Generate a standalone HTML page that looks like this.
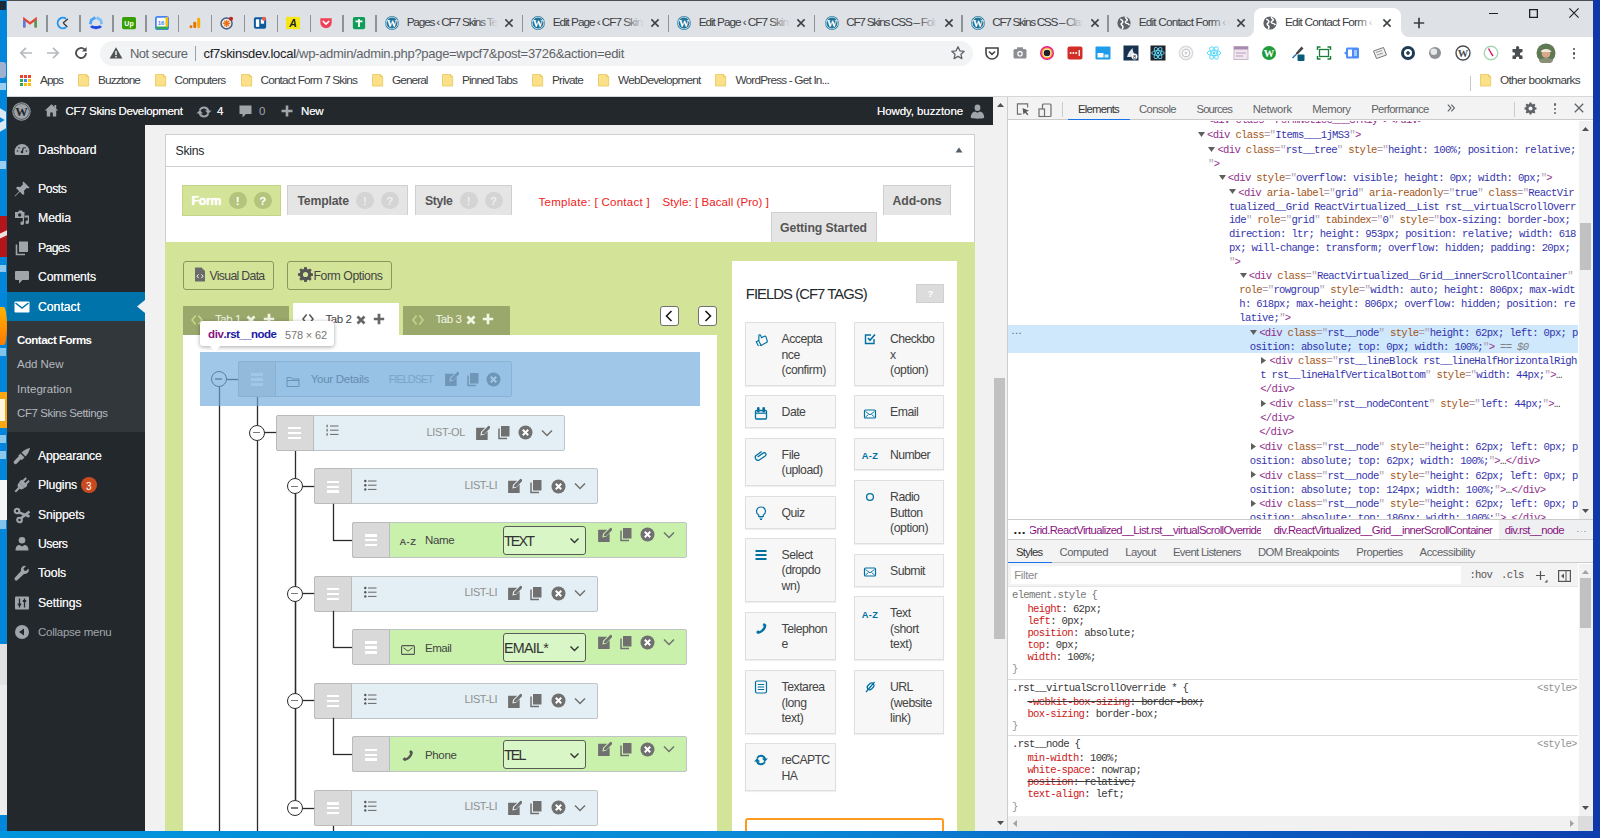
<!DOCTYPE html>
<html lang="en"><head><meta charset="utf-8"><title>Edit Contact Form</title>
<style>
*{box-sizing:border-box;margin:0;padding:0}
html,body{width:1600px;height:838px;overflow:hidden;background:#0084d8;font-family:"Liberation Sans",sans-serif;}
.a{position:absolute}
.m{font-family:"Liberation Mono",monospace;opacity:.9}
.fade:after{content:"";position:absolute;right:0;top:0;width:20px;height:100%;background:linear-gradient(90deg,rgba(222,225,230,0),#dee1e6)}
.fadew:after{content:"";position:absolute;right:0;top:0;width:20px;height:100%;background:linear-gradient(90deg,rgba(255,255,255,0),#fff)}
</style></head>
<body>
<div class="a" style="left:7px;top:0px;width:1586px;height:831px;background:#fff"></div>
<div class="a" style="left:7px;top:0px;width:1586px;height:37px;background:#dee1e6;border-top:1px solid #4c5055"></div>
<div class="a" style="left:1253.5px;top:8.4px;width:147px;height:28.6px;background:#fff;border-radius:8px 8px 0 0"></div>
<svg class="a" style="left:1245.5px;top:29px;" width="8" height="8" viewBox="0 0 8 8"><path d="M8 0v8H0A8 8 0 0 0 8 0z" fill="#fff"/></svg>
<svg class="a" style="left:1400.5px;top:29px;" width="8" height="8" viewBox="0 0 8 8"><path d="M0 0v8H8A8 8 0 0 1 0 0z" fill="#fff"/></svg>
<svg class="a" style="left:23px;top:15.5px;" width="14" height="14" viewBox="0 0 16 16"><path d="M1.5 13V3.5L8 8.5l6.5-5V13" fill="none" stroke="#ea4335" stroke-width="2.6"/><path d="M1.5 13V5" stroke="#4285f4" stroke-width="2.6"/><path d="M14.5 13V5" stroke="#34a853" stroke-width="2.6"/></svg>
<div class="a" style="left:46.3px;top:14.5px;width:1.5px;height:17px;background:#8e9398"></div>
<svg class="a" style="left:55.9px;top:15.5px;" width="14" height="14" viewBox="0 0 16 16"><path d="M11.5 3.2A6 6 0 1 0 11.5 12.8" fill="none" stroke="#2196f3" stroke-width="2.2"/><path d="M8 8l5.5-4.5M8.5 8.3L13 12.5" stroke="#333" stroke-width="1.4"/></svg>
<div class="a" style="left:79.2px;top:14.5px;width:1.5px;height:17px;background:#8e9398"></div>
<svg class="a" style="left:88.8px;top:15.5px;" width="14" height="14" viewBox="0 0 16 16"><path d="M7.300 1.800L2.600 4.600 1.500 9.500" fill="none" stroke="#4aa3f5" stroke-width="3.200"/><path d="M8.700 1.800l4.700 2.800 1.100 4.900" fill="none" stroke="#7cc0f8" stroke-width="3.200"/><path d="M2.500 11.500c1.500 2.500 4 1 5.500 2 1.500-1 4 .5 5.500-2" fill="none" stroke="#2147e8" stroke-width="3.200"/></svg>
<div class="a" style="left:112.1px;top:14.5px;width:1.5px;height:17px;background:#8e9398"></div>
<svg class="a" style="left:121.7px;top:15.5px;" width="14" height="14" viewBox="0 0 16 16"><rect x="0" y="1" width="16" height="14" rx="2" fill="#37a000"/><text x="8" y="11.5" font-size="8" font-weight="bold" fill="#fff" text-anchor="middle" font-family="Liberation Sans,sans-serif">Up</text></svg>
<div class="a" style="left:145px;top:14.5px;width:1.5px;height:17px;background:#8e9398"></div>
<svg class="a" style="left:154.6px;top:15.5px;" width="14" height="14" viewBox="0 0 16 16"><rect x="1" y="1" width="14" height="14" rx="2" fill="#fff" stroke="#4285f4" stroke-width="2"/><path d="M1 12h14v2a1 1 0 0 1-1 1H2a1 1 0 0 1-1-1z" fill="#34a853"/><path d="M12 1h2a1 1 0 0 1 1 1v10h-3z" fill="#fbbc04"/><text x="7" y="10.5" font-size="7" font-weight="bold" fill="#4285f4" text-anchor="middle" font-family="Liberation Sans,sans-serif">16</text></svg>
<div class="a" style="left:177.9px;top:14.5px;width:1.5px;height:17px;background:#8e9398"></div>
<svg class="a" style="left:187.5px;top:15.5px;" width="14" height="14" viewBox="0 0 16 16"><rect x="10.5" y="2" width="3.4" height="12" rx="1.7" fill="#f9ab00"/><rect x="6" y="6.5" width="3.4" height="7.5" rx="1.7" fill="#e37400"/><circle cx="3.4" cy="12.3" r="1.7" fill="#e37400"/></svg>
<div class="a" style="left:210.8px;top:14.5px;width:1.5px;height:17px;background:#8e9398"></div>
<svg class="a" style="left:220.4px;top:15.5px;" width="14" height="14" viewBox="0 0 16 16"><circle cx="7.5" cy="8.5" r="6.3" fill="#f4e3d0" stroke="#3b5a8a" stroke-width="1.6"/><path d="M7.5 4.5v8M3.5 8.5h8M4.8 5.8l5.4 5.4M10.2 5.8l-5.4 5.4" stroke="#e8711c" stroke-width="1.5"/><circle cx="12.6" cy="3.2" r="2.3" fill="#c5221f"/></svg>
<div class="a" style="left:243.7px;top:14.5px;width:1.5px;height:17px;background:#8e9398"></div>
<svg class="a" style="left:253.3px;top:15.5px;" width="14" height="14" viewBox="0 0 16 16"><rect x="1" y="1.5" width="14" height="13" rx="2" fill="#0c5a9e"/><rect x="3.3" y="3.8" width="3.8" height="8.6" fill="#fff"/><rect x="8.9" y="3.8" width="3.8" height="5" fill="#fff"/><circle cx="12.6" cy="3.2" r="2.4" fill="#e8604c"/></svg>
<div class="a" style="left:276.6px;top:14.5px;width:1.5px;height:17px;background:#8e9398"></div>
<svg class="a" style="left:286.2px;top:15.5px;" width="14" height="14" viewBox="0 0 16 16"><rect x="0" y="1" width="16" height="14" fill="#f5e616"/><text x="8" y="13" font-size="12" font-weight="bold" font-style="italic" fill="#222" text-anchor="middle" font-family="Liberation Sans,sans-serif">A</text></svg>
<div class="a" style="left:309.5px;top:14.5px;width:1.5px;height:17px;background:#8e9398"></div>
<svg class="a" style="left:319.1px;top:15.5px;" width="14" height="14" viewBox="0 0 16 16"><path d="M1.5 2.5h13v5a6.5 6.5 0 0 1-13 0z" fill="#ef4056"/><path d="M4.8 6.2L8 9.2l3.2-3" fill="none" stroke="#fff" stroke-width="1.8" stroke-linecap="round"/></svg>
<div class="a" style="left:342.4px;top:14.5px;width:1.5px;height:17px;background:#8e9398"></div>
<svg class="a" style="left:352px;top:15.5px;" width="14" height="14" viewBox="0 0 16 16"><rect x="1" y="1" width="14" height="14" rx="2" fill="#0f9d58"/><path d="M8 3.5v9M4 6h8" stroke="#fff" stroke-width="2"/></svg>
<div class="a" style="left:375.3px;top:14.5px;width:1.5px;height:17px;background:#8e9398"></div>
<svg class="a" style="left:384px;top:14.5px;" width="16" height="16" viewBox="0 0 16 16"><circle cx="8" cy="8" r="6.900" fill="#21759b"/><circle cx="8" cy="8" r="5.900" fill="none" stroke="#fff" stroke-width=".700"/><text x="8" y="11.800" font-size="10.500" font-weight="bold" fill="#fff" text-anchor="middle" font-family="Liberation Serif,serif">W</text></svg>
<div class="a fade" style="left:406.7px;top:14.91px;font-size:11.8px;line-height:15px;color:#3c4043;white-space:nowrap;width:91px;overflow:hidden;letter-spacing:-1.184px;">Pages ‹ CF7 Skins Template</div>
<svg class="a" style="left:503px;top:16.5px;" width="12" height="12" viewBox="0 0 12 12"><path d="M2.4 2.4L9.6 9.6M9.6 2.4L2.4 9.6" stroke="#3c4043" stroke-width="1.5"/></svg>
<div class="a" style="left:521.7px;top:14.5px;width:1.5px;height:17px;background:#8e9398"></div>
<svg class="a" style="left:530px;top:14.5px;" width="16" height="16" viewBox="0 0 16 16"><circle cx="8" cy="8" r="6.900" fill="#21759b"/><circle cx="8" cy="8" r="5.900" fill="none" stroke="#fff" stroke-width=".700"/><text x="8" y="11.800" font-size="10.500" font-weight="bold" fill="#fff" text-anchor="middle" font-family="Liberation Serif,serif">W</text></svg>
<div class="a fade" style="left:552.7px;top:14.91px;font-size:11.8px;line-height:15px;color:#3c4043;white-space:nowrap;width:91px;overflow:hidden;letter-spacing:-1.047px;">Edit Page ‹ CF7 Skins Dev</div>
<svg class="a" style="left:649px;top:16.5px;" width="12" height="12" viewBox="0 0 12 12"><path d="M2.4 2.4L9.6 9.6M9.6 2.4L2.4 9.6" stroke="#3c4043" stroke-width="1.5"/></svg>
<div class="a" style="left:667.7px;top:14.5px;width:1.5px;height:17px;background:#8e9398"></div>
<svg class="a" style="left:676px;top:14.5px;" width="16" height="16" viewBox="0 0 16 16"><circle cx="8" cy="8" r="6.900" fill="#21759b"/><circle cx="8" cy="8" r="5.900" fill="none" stroke="#fff" stroke-width=".700"/><text x="8" y="11.800" font-size="10.500" font-weight="bold" fill="#fff" text-anchor="middle" font-family="Liberation Serif,serif">W</text></svg>
<div class="a fade" style="left:698.7px;top:14.91px;font-size:11.8px;line-height:15px;color:#3c4043;white-space:nowrap;width:91px;overflow:hidden;letter-spacing:-1.047px;">Edit Page ‹ CF7 Skins Dev</div>
<svg class="a" style="left:795px;top:16.5px;" width="12" height="12" viewBox="0 0 12 12"><path d="M2.4 2.4L9.6 9.6M9.6 2.4L2.4 9.6" stroke="#3c4043" stroke-width="1.5"/></svg>
<div class="a" style="left:813.7px;top:14.5px;width:1.5px;height:17px;background:#8e9398"></div>
<svg class="a" style="left:823.5px;top:14.5px;" width="16" height="16" viewBox="0 0 16 16"><circle cx="8" cy="8" r="6.900" fill="#21759b"/><circle cx="8" cy="8" r="5.900" fill="none" stroke="#fff" stroke-width=".700"/><text x="8" y="11.800" font-size="10.500" font-weight="bold" fill="#fff" text-anchor="middle" font-family="Liberation Serif,serif">W</text></svg>
<div class="a fade" style="left:846.2px;top:14.91px;font-size:11.8px;line-height:15px;color:#3c4043;white-space:nowrap;width:91px;overflow:hidden;letter-spacing:-1.278px;">CF7 Skins CSS – Folders</div>
<svg class="a" style="left:942.5px;top:16.5px;" width="12" height="12" viewBox="0 0 12 12"><path d="M2.4 2.4L9.6 9.6M9.6 2.4L2.4 9.6" stroke="#3c4043" stroke-width="1.5"/></svg>
<div class="a" style="left:961.2px;top:14.5px;width:1.5px;height:17px;background:#8e9398"></div>
<svg class="a" style="left:969.5px;top:14.5px;" width="16" height="16" viewBox="0 0 16 16"><circle cx="8" cy="8" r="6.900" fill="#21759b"/><circle cx="8" cy="8" r="5.900" fill="none" stroke="#fff" stroke-width=".700"/><text x="8" y="11.800" font-size="10.500" font-weight="bold" fill="#fff" text-anchor="middle" font-family="Liberation Serif,serif">W</text></svg>
<div class="a fade" style="left:992.2px;top:14.91px;font-size:11.8px;line-height:15px;color:#3c4043;white-space:nowrap;width:91px;overflow:hidden;letter-spacing:-1.321px;">CF7 Skins CSS – Class</div>
<svg class="a" style="left:1088.5px;top:16.5px;" width="12" height="12" viewBox="0 0 12 12"><path d="M2.4 2.4L9.6 9.6M9.6 2.4L2.4 9.6" stroke="#3c4043" stroke-width="1.5"/></svg>
<div class="a" style="left:1107.2px;top:14.5px;width:1.5px;height:17px;background:#8e9398"></div>
<svg class="a" style="left:1116px;top:14.5px;" width="16" height="16" viewBox="0 0 16 16"><circle cx="8" cy="8" r="6.6" fill="#5f6368"/><path d="M4.2 4.2c1.2.2 2.3 1 2.6 2.2.3 1.1-.7 1.6-1.5 2.2-.6.5.5 1.7 1.2 2.3.6.5.3 2.2-.3 3.2M9.5 1.8c-.4 1 .6 1.7 1.4 2.3.9.6.2 1.8-.8 2-1 .3-1 1.6-.1 2 1.2.5 2.5.6 3.4 2" fill="none" stroke="#fff" stroke-width="1.5"/></svg>
<div class="a fade" style="left:1138.7px;top:14.91px;font-size:11.8px;line-height:15px;color:#3c4043;white-space:nowrap;width:91px;overflow:hidden;letter-spacing:-0.817px;">Edit Contact Form ‹ CF7</div>
<svg class="a" style="left:1235px;top:16.5px;" width="12" height="12" viewBox="0 0 12 12"><path d="M2.4 2.4L9.6 9.6M9.6 2.4L2.4 9.6" stroke="#3c4043" stroke-width="1.5"/></svg>
<svg class="a" style="left:1262.3px;top:14.5px;" width="16" height="16" viewBox="0 0 16 16"><circle cx="8" cy="8" r="6.6" fill="#5f6368"/><path d="M4.2 4.2c1.2.2 2.3 1 2.6 2.2.3 1.1-.7 1.6-1.5 2.2-.6.5.5 1.7 1.2 2.3.6.5.3 2.2-.3 3.2M9.5 1.8c-.4 1 .6 1.7 1.4 2.3.9.6.2 1.8-.8 2-1 .3-1 1.6-.1 2 1.2.5 2.5.6 3.4 2" fill="none" stroke="#fff" stroke-width="1.5"/></svg>
<div class="a fadew" style="left:1285px;top:14.91px;font-size:11.8px;line-height:15px;color:#3c4043;white-space:nowrap;width:91px;overflow:hidden;letter-spacing:-0.817px;">Edit Contact Form ‹ CF7</div>
<svg class="a" style="left:1381.3px;top:16.5px;" width="12" height="12" viewBox="0 0 12 12"><path d="M2.4 2.4L9.6 9.6M9.6 2.4L2.4 9.6" stroke="#3c4043" stroke-width="1.5"/></svg>
<svg class="a" style="left:1412.2px;top:16px;" width="14" height="14" viewBox="0 0 14 14"><path d="M7 1.800v10.400M1.800 7h10.400" stroke="#3c4043" stroke-width="1.700"/></svg>
<div class="a" style="left:1489px;top:13px;width:9px;height:1.2px;background:#222"></div>
<div class="a" style="left:1529.2px;top:8.7px;width:9px;height:9px;border:1px solid #222;box-shadow:inset 0 0 0 .300px #222"></div>
<svg class="a" style="left:1568.5px;top:8.3px;" width="10" height="10" viewBox="0 0 10 10"><path d="M.400 .400l9.200 9.200M9.600 .400L.400 9.600" stroke="#222" stroke-width="1.150"/></svg>
<svg class="a" style="left:18px;top:45px;" width="16" height="16" viewBox="0 0 16 16"><path d="M14 8H3M8 2.8L2.8 8 8 13.2" fill="none" stroke="#b6b9bd" stroke-width="1.7"/></svg>
<svg class="a" style="left:45px;top:45px;" width="16" height="16" viewBox="0 0 16 16"><path d="M2 8h11M8 2.8L13.2 8 8 13.2" fill="none" stroke="#b6b9bd" stroke-width="1.7"/></svg>
<svg class="a" style="left:73px;top:45px;" width="16" height="16" viewBox="0 0 16 16"><path d="M13 8a5 5 0 1 1-1.5-3.6" fill="none" stroke="#4a4d51" stroke-width="1.8"/><path d="M13.6 2v4.6H9z" fill="#4a4d51"/></svg>
<div class="a" style="left:100px;top:40.5px;width:872.5px;height:25.5px;background:#f1f3f4;border-radius:13px"></div>
<svg class="a" style="left:109px;top:46px;" width="14" height="14" viewBox="0 0 14 14"><path d="M7 1.2L13.4 12.5H0.6z" fill="#4f5356"/><path d="M7 5v4" stroke="#f1f3f4" stroke-width="1.5"/><circle cx="7" cy="10.7" r=".85" fill="#f1f3f4"/></svg>
<div class="a" style="left:130px;top:44.50px;font-size:13px;line-height:17px;color:#5f6368;white-space:nowrap;letter-spacing:-0.536px;">Not secure</div>
<div class="a" style="left:195px;top:46px;width:1px;height:15px;background:#9aa0a6"></div>
<div class="a" style="left:203.5px;top:44.50px;font-size:13px;line-height:17px;color:#5f6368;white-space:nowrap;letter-spacing:-0.297px;"><span style="color:#202124">cf7skinsdev.local</span>/wp-admin/admin.php?page=wpcf7&amp;post=3726&amp;action=edit</div>
<svg class="a" style="left:950px;top:45px;" width="16" height="16" viewBox="0 0 16 16"><path d="M8 1.8l1.9 4 4.3.5-3.2 3 .9 4.3L8 11.4l-3.9 2.2.9-4.3-3.2-3 4.3-.5z" fill="none" stroke="#5f6368" stroke-width="1.3" stroke-linejoin="round"/></svg>
<svg class="a" style="left:984px;top:45px;" width="16" height="16" viewBox="0 0 16 16"><path d="M2 3h12v5a6 6 0 0 1-12 0z" fill="none" stroke="#444" stroke-width="1.6"/><path d="M5 6.5l3 2.8 3-2.8" fill="none" stroke="#444" stroke-width="1.6"/></svg>
<svg class="a" style="left:1011.7px;top:45px;" width="16" height="16" viewBox="0 0 16 16"><rect x="1.5" y="4" width="13" height="9.5" rx="1.5" fill="#8a8d91"/><rect x="5" y="2.3" width="6" height="3" fill="#8a8d91"/><circle cx="8" cy="8.8" r="2.8" fill="#fff"/><circle cx="8" cy="8.8" r="1.6" fill="#8a8d91"/></svg>
<svg class="a" style="left:1039.4px;top:45px;" width="16" height="16" viewBox="0 0 16 16"><circle cx="8" cy="8" r="7" fill="#e91e8c"/><circle cx="8" cy="8" r="5.6" fill="#f6a623"/><circle cx="8" cy="8" r="4.2" fill="#fff"/><circle cx="8" cy="8" r="3.3" fill="#222"/></svg>
<svg class="a" style="left:1067.1px;top:45px;" width="16" height="16" viewBox="0 0 16 16"><rect x="0.5" y="1.5" width="15" height="13" rx="2" fill="#d32d27"/><circle cx="3.6" cy="8" r="1" fill="#fff"/><circle cx="6.4" cy="8" r="1" fill="#fff"/><circle cx="9.2" cy="8" r="1" fill="#fff"/><rect x="11.6" y="5" width="1.3" height="6" fill="#fff"/></svg>
<svg class="a" style="left:1094.8px;top:45px;" width="16" height="16" viewBox="0 0 16 16"><rect x="0.5" y="1.5" width="15" height="13" rx="1" fill="#1e9be9"/><rect x="2.5" y="8" width="6" height="4.5" fill="#fff"/><rect x="9.5" y="9.5" width="4" height="3" fill="#d5ecfb"/></svg>
<svg class="a" style="left:1122.5px;top:45px;" width="16" height="16" viewBox="0 0 16 16"><rect x="0.5" y="0.5" width="15" height="15" fill="#16324f"/><path d="M4 12c1-4 3-7 6-9-1 3 1 4 1 6s-2 3-4 3" fill="#dfe7ef"/><circle cx="11.5" cy="11.5" r="3" fill="#fff"/><text x="11.5" y="13.7" font-size="5.5" text-anchor="middle" fill="#222" font-family="Liberation Sans,sans-serif">8</text></svg>
<svg class="a" style="left:1150.2px;top:45px;" width="16" height="16" viewBox="0 0 16 16"><rect x="0.5" y="0.5" width="15" height="15" fill="#20232a"/><g fill="none" stroke="#61dafb" stroke-width=".9"><ellipse cx="8" cy="8" rx="6.3" ry="2.4"/><ellipse cx="8" cy="8" rx="6.3" ry="2.4" transform="rotate(60 8 8)"/><ellipse cx="8" cy="8" rx="6.3" ry="2.4" transform="rotate(120 8 8)"/></g><circle cx="8" cy="8" r="1.2" fill="#61dafb"/></svg>
<svg class="a" style="left:1177.9px;top:45px;" width="16" height="16" viewBox="0 0 16 16"><circle cx="8" cy="8" r="6.6" fill="none" stroke="#d9dbde" stroke-width="1.6"/><circle cx="8" cy="8" r="3.8" fill="none" stroke="#c8cacd" stroke-width="1.4"/><circle cx="8" cy="8" r="1.4" fill="#d0d2d5"/></svg>
<svg class="a" style="left:1205.6px;top:45px;" width="16" height="16" viewBox="0 0 16 16"><g fill="none" stroke="#61dafb" stroke-width="1"><ellipse cx="8" cy="8" rx="6.8" ry="2.6"/><ellipse cx="8" cy="8" rx="6.8" ry="2.6" transform="rotate(60 8 8)"/><ellipse cx="8" cy="8" rx="6.8" ry="2.6" transform="rotate(120 8 8)"/></g><circle cx="8" cy="8" r="1.4" fill="#61dafb"/></svg>
<svg class="a" style="left:1233.3px;top:45px;" width="16" height="16" viewBox="0 0 16 16"><rect x="1" y="1.5" width="14" height="13" fill="#efe6ef" stroke="#c9b8cc" stroke-width="1"/><rect x="1" y="1.5" width="14" height="3" fill="#a88bb0"/><path d="M3 8h10M3 11h7" stroke="#cdb9d1" stroke-width="1.4"/></svg>
<svg class="a" style="left:1261px;top:45px;" width="16" height="16" viewBox="0 0 16 16"><circle cx="8" cy="8" r="7" fill="#1f9d3a"/><text x="8" y="12" font-size="10.5" font-weight="bold" fill="#fff" text-anchor="middle" font-family="Liberation Serif,serif">W</text></svg>
<svg class="a" style="left:1288.7px;top:45px;" width="16" height="16" viewBox="0 0 16 16"><path d="M12.5 1.5l2 2-5.5 5.5-2.5 1 .8-2.6z" fill="#444"/><path d="M7 9.5L3.5 13" stroke="#2f6fb4" stroke-width="1.6"/><rect x="8.5" y="9.5" width="7" height="6.5" rx="1" fill="#0b5b7a"/></svg>
<svg class="a" style="left:1316.4px;top:45px;" width="16" height="16" viewBox="0 0 16 16"><path d="M1.5 5V2h3M11.5 2h3v3M14.500 11v3h-3M4.500 14h-3v-3" fill="none" stroke="#1b7f3b" stroke-width="1.5"/><rect x="3.5" y="4.500" width="9" height="7" fill="none" stroke="#1b7f3b" stroke-width="1.3"/></svg>
<svg class="a" style="left:1344.1px;top:45px;" width="16" height="16" viewBox="0 0 16 16"><rect x="2" y="2.500" width="13" height="11" rx="1.5" fill="#4a8df8"/><rect x="4" y="4.500" width="4" height="7" fill="#fff"/><path d="M10 6h3M10 8h3M10 10h3" stroke="#fff" stroke-width="1"/><path d="M0 8l2.500-2v4z" fill="#4a8df8"/></svg>
<svg class="a" style="left:1371.8px;top:45px;" width="16" height="16" viewBox="0 0 16 16"><path d="M1.500 6l10-3.500 3 7.500-10 3.500z" fill="#eee" stroke="#777" stroke-width="1"/><path d="M4 7.500l6-2M5 10l6-2" stroke="#999" stroke-width="1"/></svg>
<svg class="a" style="left:1399.5px;top:45px;" width="16" height="16" viewBox="0 0 16 16"><circle cx="8" cy="8" r="7" fill="#1d3a57"/><circle cx="8" cy="8" r="4" fill="#fff"/><path d="M6 8h4M8 6v4" stroke="#1d3a57" stroke-width="1.6"/></svg>
<svg class="a" style="left:1427.2px;top:45px;" width="16" height="16" viewBox="0 0 16 16"><circle cx="8" cy="8" r="6" fill="#8f9296"/><circle cx="6.800" cy="6.800" r="3.300" fill="#e8e8e8"/></svg>
<svg class="a" style="left:1454.9px;top:45px;" width="16" height="16" viewBox="0 0 16 16"><circle cx="8" cy="8" r="7" fill="#fff" stroke="#4a4d51" stroke-width="1.4"/><text x="8" y="12" font-size="10.5" font-weight="bold" fill="#4a4d51" text-anchor="middle" font-family="Liberation Serif,serif">W</text></svg>
<svg class="a" style="left:1482.6px;top:45px;" width="16" height="16" viewBox="0 0 16 16"><circle cx="8" cy="8" r="6.800" fill="#fff" stroke="#a7d7b3" stroke-width="1.4"/><path d="M8 8L5.500 3.500M8 8l2 3" stroke="#d81b60" stroke-width="1.400"/></svg>
<svg class="a" style="left:1510.3px;top:45px;" width="16" height="16" viewBox="0 0 16 16"><path d="M6 2.500a1.600 1.600 0 0 1 3.200 0V4h3.300v3.300h-1a1.600 1.600 0 0 0 0 3.200h1V14H9.200v-1a1.600 1.600 0 0 0-3.200 0v1H2.500v-3.500h1a1.600 1.600 0 0 0 0-3.200h-1V4H6z" fill="#4a4d51"/></svg>
<svg class="a" style="left:1536px;top:43px;" width="20" height="20" viewBox="0 0 20 20"><circle cx="10" cy="10" r="9.500" fill="#5f7a52"/><circle cx="10" cy="10.500" r="4.300" fill="#d9a98c"/><path d="M5 8.500c0-3.500 10-3.500 10 0l1 .5H5z" fill="#efe9dc"/><path d="M3 18c1-4 13-4 14 0a9.500 9.500 0 0 1-14 0z" fill="#8b8f7a"/></svg>
<div class="a" style="left:1572.7px;top:47.6px;width:2.8px;height:2.8px;background:#4a4d51;border-radius:50%"></div>
<div class="a" style="left:1572.7px;top:52.1px;width:2.8px;height:2.8px;background:#4a4d51;border-radius:50%"></div>
<div class="a" style="left:1572.7px;top:56.6px;width:2.8px;height:2.8px;background:#4a4d51;border-radius:50%"></div>
<div class="a" style="left:7px;top:96px;width:1586px;height:1px;background:#d5d7db"></div>
<div class="a" style="left:19.8px;top:74.5px;width:3px;height:3px;background:#ea4335"></div>
<div class="a" style="left:24px;top:74.5px;width:3px;height:3px;background:#ea4335"></div>
<div class="a" style="left:28.2px;top:74.5px;width:3px;height:3px;background:#ea4335"></div>
<div class="a" style="left:19.8px;top:78.8px;width:3px;height:3px;background:#34a853"></div>
<div class="a" style="left:24px;top:78.8px;width:3px;height:3px;background:#4285f4"></div>
<div class="a" style="left:28.2px;top:78.8px;width:3px;height:3px;background:#fbbc04"></div>
<div class="a" style="left:19.8px;top:83.1px;width:3px;height:3px;background:#34a853"></div>
<div class="a" style="left:24px;top:83.1px;width:3px;height:3px;background:#fbbc04"></div>
<div class="a" style="left:28.2px;top:83.1px;width:3px;height:3px;background:#fbbc04"></div>
<div class="a" style="left:40px;top:72.71px;font-size:11.8px;line-height:15px;color:#3c4043;white-space:nowrap;letter-spacing:-0.974px;">Apps</div>
<svg class="a" style="left:78px;top:74.3px;" width="12" height="13" viewBox="0 0 12 13"><path d="M.5 .5h8l2.200 2.200v9.300H.5z" fill="#fbe08a" stroke="#eac55a" stroke-width=".800"/><path d="M8.500 .5v2.200h2.200" fill="#f3d06b" stroke="#eac55a" stroke-width=".600"/></svg>
<div class="a" style="left:98px;top:72.71px;font-size:11.8px;line-height:15px;color:#3c4043;white-space:nowrap;letter-spacing:-0.900px;">Buzztone</div>
<svg class="a" style="left:155px;top:74.3px;" width="12" height="13" viewBox="0 0 12 13"><path d="M.5 .5h8l2.200 2.200v9.300H.5z" fill="#fbe08a" stroke="#eac55a" stroke-width=".800"/><path d="M8.500 .5v2.200h2.200" fill="#f3d06b" stroke="#eac55a" stroke-width=".600"/></svg>
<div class="a" style="left:174.5px;top:72.71px;font-size:11.8px;line-height:15px;color:#3c4043;white-space:nowrap;letter-spacing:-0.746px;">Computers</div>
<svg class="a" style="left:241px;top:74.3px;" width="12" height="13" viewBox="0 0 12 13"><path d="M.5 .5h8l2.200 2.200v9.300H.5z" fill="#fbe08a" stroke="#eac55a" stroke-width=".800"/><path d="M8.500 .5v2.200h2.200" fill="#f3d06b" stroke="#eac55a" stroke-width=".600"/></svg>
<div class="a" style="left:260.5px;top:72.71px;font-size:11.8px;line-height:15px;color:#3c4043;white-space:nowrap;letter-spacing:-0.848px;">Contact Form 7 Skins</div>
<svg class="a" style="left:372px;top:74.3px;" width="12" height="13" viewBox="0 0 12 13"><path d="M.5 .5h8l2.200 2.200v9.300H.5z" fill="#fbe08a" stroke="#eac55a" stroke-width=".800"/><path d="M8.500 .5v2.200h2.200" fill="#f3d06b" stroke="#eac55a" stroke-width=".600"/></svg>
<div class="a" style="left:392px;top:72.71px;font-size:11.8px;line-height:15px;color:#3c4043;white-space:nowrap;letter-spacing:-0.926px;">General</div>
<svg class="a" style="left:442px;top:74.3px;" width="12" height="13" viewBox="0 0 12 13"><path d="M.5 .5h8l2.200 2.200v9.300H.5z" fill="#fbe08a" stroke="#eac55a" stroke-width=".800"/><path d="M8.500 .5v2.200h2.200" fill="#f3d06b" stroke="#eac55a" stroke-width=".600"/></svg>
<div class="a" style="left:462px;top:72.71px;font-size:11.8px;line-height:15px;color:#3c4043;white-space:nowrap;letter-spacing:-0.885px;">Pinned Tabs</div>
<svg class="a" style="left:532px;top:74.3px;" width="12" height="13" viewBox="0 0 12 13"><path d="M.5 .5h8l2.200 2.200v9.300H.5z" fill="#fbe08a" stroke="#eac55a" stroke-width=".800"/><path d="M8.500 .5v2.200h2.200" fill="#f3d06b" stroke="#eac55a" stroke-width=".600"/></svg>
<div class="a" style="left:552px;top:72.71px;font-size:11.8px;line-height:15px;color:#3c4043;white-space:nowrap;letter-spacing:-0.818px;">Private</div>
<svg class="a" style="left:598px;top:74.3px;" width="12" height="13" viewBox="0 0 12 13"><path d="M.5 .5h8l2.200 2.200v9.300H.5z" fill="#fbe08a" stroke="#eac55a" stroke-width=".800"/><path d="M8.500 .5v2.200h2.200" fill="#f3d06b" stroke="#eac55a" stroke-width=".600"/></svg>
<div class="a" style="left:618px;top:72.71px;font-size:11.8px;line-height:15px;color:#3c4043;white-space:nowrap;letter-spacing:-0.791px;">WebDevelopment</div>
<svg class="a" style="left:715px;top:74.3px;" width="12" height="13" viewBox="0 0 12 13"><path d="M.5 .5h8l2.200 2.200v9.300H.5z" fill="#fbe08a" stroke="#eac55a" stroke-width=".800"/><path d="M8.500 .5v2.200h2.200" fill="#f3d06b" stroke="#eac55a" stroke-width=".600"/></svg>
<div class="a" style="left:735.5px;top:72.71px;font-size:11.8px;line-height:15px;color:#3c4043;white-space:nowrap;letter-spacing:-0.814px;">WordPress - Get In...</div>
<div class="a" style="left:1470px;top:76px;width:1px;height:15px;background:#c4c7cc"></div>
<svg class="a" style="left:1480px;top:74.3px;" width="12" height="13" viewBox="0 0 12 13"><path d="M.5 .5h8l2.200 2.200v9.300H.5z" fill="#fbe08a" stroke="#eac55a" stroke-width=".800"/><path d="M8.500 .5v2.200h2.200" fill="#f3d06b" stroke="#eac55a" stroke-width=".600"/></svg>
<div class="a" style="left:1500px;top:72.71px;font-size:11.8px;line-height:15px;color:#3c4043;white-space:nowrap;letter-spacing:-0.700px;">Other bookmarks</div>
<div class="a" style="left:7px;top:97px;width:986px;height:734px;background:#f1f1f1"></div>
<div class="a" style="left:7px;top:97px;width:138px;height:734px;background:#23282d"></div>
<div class="a" style="left:7px;top:97px;width:986px;height:28px;background:#23282d"></div>
<svg class="a" style="left:12.2px;top:101.5px;" width="19" height="19" viewBox="0 0 19 19"><circle cx="9.500" cy="9.500" r="9.200" fill="#9ea3a8"/><circle cx="9.500" cy="9.500" r="7.900" fill="none" stroke="#23282d" stroke-width=".600"/><text x="9.500" y="14" font-size="13" font-weight="bold" fill="#23282d" text-anchor="middle" font-family="Liberation Serif,serif" textLength="12.500" lengthAdjust="spacingAndGlyphs">W</text></svg>
<svg class="a" style="left:44px;top:103px;" width="15" height="15" viewBox="0 0 15 15"><path d="M7.500 1.200L.8 7.500h2v6h3.400V9.500h2.600v4h3.400v-6h2z" fill="#a0a5aa"/><rect x="10.400" y="2" width="1.800" height="3.500" fill="#a0a5aa"/></svg>
<div class="a" style="left:65.5px;top:104.32px;font-size:11.5px;line-height:15px;color:#eee;white-space:nowrap;letter-spacing:-0.333px;text-shadow:0 0 .5px #eee;">CF7 Skins Development</div>
<svg class="a" style="left:196px;top:103.5px;" width="16" height="16" viewBox="0 0 16 16"><path d="M8 2.500a5.500 5.500 0 0 1 5.300 4h2.200l-3.300 3.600L9 6.500h2.100A3.600 3.600 0 0 0 4.600 6.800L3 5.500A5.500 5.500 0 0 1 8 2.500zM8 13.500a5.500 5.500 0 0 1-5.300-4H.5l3.300-3.600L7 9.500H4.900a3.600 3.600 0 0 0 6.500-.3L13 10.500a5.500 5.500 0 0 1-5 3z" fill="#a0a5aa"/></svg>
<div class="a" style="left:217px;top:104.32px;font-size:11.5px;line-height:15px;color:#eee;white-space:nowrap;text-shadow:0 0 .5px #eee;">4</div>
<svg class="a" style="left:238px;top:104px;" width="15" height="15" viewBox="0 0 15 15"><path d="M1.500 1.500h12v8.500H8l-3.500 3.500V10H1.500z" fill="#a0a5aa"/></svg>
<div class="a" style="left:259px;top:104.32px;font-size:11.5px;line-height:15px;color:#a0a5aa;white-space:nowrap;">0</div>
<svg class="a" style="left:280px;top:104px;" width="14" height="14" viewBox="0 0 14 14"><path d="M7 1.500v11M1.500 7h11" stroke="#a0a5aa" stroke-width="2.600"/></svg>
<div class="a" style="left:301px;top:104.32px;font-size:11.5px;line-height:15px;color:#eee;white-space:nowrap;letter-spacing:-0.169px;text-shadow:0 0 .5px #eee;">New</div>
<div class="a" style="left:877px;top:104.32px;font-size:11.5px;line-height:15px;color:#eee;white-space:nowrap;letter-spacing:-0.091px;text-shadow:0 0 .5px #eee;">Howdy, buzztone</div>
<svg class="a" style="left:969.5px;top:103.5px;" width="15" height="15" viewBox="0 0 15 15"><ellipse cx="7.500" cy="3.800" rx="2.900" ry="3.300" fill="#a0a5aa"/><path d="M.8 13.800c0-4.500 2.300-6 4.200-6.300l2.500 1.300 2.500-1.300c1.900.3 4.200 1.800 4.200 6.300-2.500 1.200-11 1.200-13.400 0z" fill="#a0a5aa"/></svg>
<div class="a" style="left:7px;top:291.5px;width:138px;height:29.5px;background:#0073aa"></div>
<svg class="a" style="left:137px;top:300px;" width="8" height="13" viewBox="0 0 8 13"><path d="M8 0v13L0 6.500z" fill="#f1f1f1"/></svg>
<div class="a" style="left:7px;top:321px;width:138px;height:111px;background:#32373c"></div>
<svg class="a" style="left:13px;top:141px;" width="18" height="18" viewBox="0 0 18 18"><path d="M9 3a7.400 7.400 0 0 0-7.400 7.400c0 1.300.3 2.500.8 3.600h13.200c.5-1.100.8-2.300.8-3.600A7.400 7.400 0 0 0 9 3z" fill="#a0a5aa"/><circle cx="9" cy="11" r="1.300" fill="#23282d"/><path d="M9 11l1.500-4.500" stroke="#23282d" stroke-width="1.200"/><circle cx="4.500" cy="10" r=".8" fill="#23282d"/><circle cx="13.500" cy="10" r=".8" fill="#23282d"/><circle cx="6" cy="6.800" r=".8" fill="#23282d"/><circle cx="12" cy="6.800" r=".8" fill="#23282d"/></svg>
<div class="a" style="left:38px;top:142.26px;font-size:12.25px;line-height:16px;color:#eee;white-space:nowrap;letter-spacing:-0.159px;text-shadow:0 0 .5px #eee;">Dashboard</div>
<svg class="a" style="left:13px;top:179.5px;" width="18" height="18" viewBox="0 0 18 18"><path d="M10.500 1.500l6 6-1.300 1-1.500-.5-2.700 2.700.300 3-1.300 1.300-3.200-3.200L2 16.500l-.5-.5 4.700-4.800L3 8l1.300-1.300 3 .3L10 4.300l-.5-1.500z" fill="#a0a5aa"/></svg>
<div class="a" style="left:38px;top:180.76px;font-size:12.25px;line-height:16px;color:#eee;white-space:nowrap;letter-spacing:-0.427px;text-shadow:0 0 .5px #eee;">Posts</div>
<svg class="a" style="left:13px;top:209px;" width="18" height="18" viewBox="0 0 18 18"><path d="M2 3h3l1-1.500h3L10 3h1.500v6H2z" fill="#a0a5aa"/><circle cx="6.700" cy="6" r="1.700" fill="#23282d"/><path d="M11 8v6.300a1.800 1.800 0 1 1-1.200-1.700V8zM16 6.500v6.800a1.800 1.800 0 1 1-1.200-1.700V8.500H12V6.500z" fill="#a0a5aa"/></svg>
<div class="a" style="left:38px;top:210.26px;font-size:12.25px;line-height:16px;color:#eee;white-space:nowrap;letter-spacing:-0.073px;text-shadow:0 0 .5px #eee;">Media</div>
<svg class="a" style="left:13px;top:238.5px;" width="18" height="18" viewBox="0 0 18 18"><path d="M6 2.500h9v10.500H6z" fill="#a0a5aa"/><path d="M3.500 5.500v10H12" fill="none" stroke="#a0a5aa" stroke-width="1.600"/></svg>
<div class="a" style="left:38px;top:239.76px;font-size:12.25px;line-height:16px;color:#eee;white-space:nowrap;letter-spacing:-0.647px;text-shadow:0 0 .5px #eee;">Pages</div>
<svg class="a" style="left:13px;top:268px;" width="18" height="18" viewBox="0 0 18 18"><path d="M3 3h12a1 1 0 0 1 1 1v7a1 1 0 0 1-1 1H9.500L6 15.500V12H3a1 1 0 0 1-1-1V4a1 1 0 0 1 1-1z" fill="#a0a5aa"/></svg>
<div class="a" style="left:38px;top:269.26px;font-size:12.25px;line-height:16px;color:#eee;white-space:nowrap;letter-spacing:-0.153px;text-shadow:0 0 .5px #eee;">Comments</div>
<svg class="a" style="left:13px;top:297.5px;" width="18" height="18" viewBox="0 0 18 18"><rect x="1.500" y="3.500" width="15" height="11" rx="1" fill="#fff"/><path d="M2.500 5l6.500 5 6.500-5" fill="none" stroke="#0073aa" stroke-width="1.500"/></svg>
<div class="a" style="left:38px;top:298.76px;font-size:12.25px;line-height:16px;color:#fff;white-space:nowrap;letter-spacing:-0.031px;text-shadow:0 0 .5px #eee;">Contact</div>
<svg class="a" style="left:13px;top:446.5px;" width="18" height="18" viewBox="0 0 18 18"><path d="M8.500 5.500C11 3 14.500 1.500 17 1c-.500 2.500-2 6-4.500 8.500z" fill="#a0a5aa"/><path d="M7.500 6.500l4 4-2.300 2.300c-1.500 1.200-3-2.800-4-4z" fill="#a0a5aa"/><path d="M6.300 11.200L2.500 15.300" stroke="#a0a5aa" stroke-width="3.600" stroke-linecap="round"/></svg>
<div class="a" style="left:38px;top:447.76px;font-size:12.25px;line-height:16px;color:#eee;white-space:nowrap;letter-spacing:-0.257px;text-shadow:0 0 .5px #eee;">Appearance</div>
<svg class="a" style="left:13px;top:476px;" width="18" height="18" viewBox="0 0 18 18"><g transform="rotate(45 9 9)" fill="#a0a5aa"><rect x="4.800" y="5.300" width="8.400" height="4" rx=".800"/><path d="M5.300 9.300h7.400c0 3-1.500 4.300-3.700 4.300S5.300 12.300 5.300 9.300z"/><rect x="6" y="1" width="2" height="5"/><rect x="10" y="1" width="2" height="5"/><rect x="8" y="13" width="2" height="5.500"/></g></svg>
<div class="a" style="left:38px;top:477.26px;font-size:12.25px;line-height:16px;color:#eee;white-space:nowrap;letter-spacing:-0.168px;text-shadow:0 0 .5px #eee;">Plugins</div>
<svg class="a" style="left:13px;top:505.5px;" width="18" height="18" viewBox="0 0 18 18"><circle cx="4" cy="5" r="2.300" fill="none" stroke="#a0a5aa" stroke-width="2.100"/><circle cx="6.500" cy="14" r="2.300" fill="none" stroke="#a0a5aa" stroke-width="2.100"/><path d="M5.800 6.300L16.500 10.500M8 12.300l8.500-6.800" stroke="#a0a5aa" stroke-width="2.500"/></svg>
<div class="a" style="left:38px;top:506.76px;font-size:12.25px;line-height:16px;color:#eee;white-space:nowrap;letter-spacing:-0.147px;text-shadow:0 0 .5px #eee;">Snippets</div>
<svg class="a" style="left:13px;top:534.5px;" width="18" height="18" viewBox="0 0 18 18"><circle cx="9" cy="5.300" r="3.300" fill="#a0a5aa"/><path d="M2.500 15.500c0-4.500 2.500-5.500 4-5.500l2.500 1.500 2.500-1.500c1.500 0 4 1 4 5.500z" fill="#a0a5aa"/></svg>
<div class="a" style="left:38px;top:535.76px;font-size:12.25px;line-height:16px;color:#eee;white-space:nowrap;letter-spacing:-0.498px;text-shadow:0 0 .5px #eee;">Users</div>
<svg class="a" style="left:13px;top:564px;" width="18" height="18" viewBox="0 0 18 18"><path d="M15.500 4.500l-2.500 2.500-2-.5-.5-2L13 2a4 4 0 0 0-5 5L2 13.500a1.700 1.700 0 0 0 2.500 2.500L11 10a4 4 0 0 0 4.500-5.500z" fill="#a0a5aa"/></svg>
<div class="a" style="left:38px;top:565.26px;font-size:12.25px;line-height:16px;color:#eee;white-space:nowrap;letter-spacing:-0.120px;text-shadow:0 0 .5px #eee;">Tools</div>
<svg class="a" style="left:13px;top:593.5px;" width="18" height="18" viewBox="0 0 18 18"><rect x="2" y="2.500" width="14" height="13" rx="1" fill="#a0a5aa"/><path d="M6.500 4.500v9M11.500 4.500v9" stroke="#23282d" stroke-width="1.300"/><rect x="4.800" y="9.500" width="3.400" height="2" fill="#23282d"/><rect x="9.800" y="6" width="3.400" height="2" fill="#23282d"/></svg>
<div class="a" style="left:38px;top:594.76px;font-size:12.25px;line-height:16px;color:#eee;white-space:nowrap;letter-spacing:-0.095px;text-shadow:0 0 .5px #eee;">Settings</div>
<svg class="a" style="left:13px;top:623px;" width="18" height="18" viewBox="0 0 18 18"><circle cx="9" cy="9" r="7" fill="#a0a5aa"/><path d="M11 5.500v7L6 9z" fill="#23282d"/></svg>
<div class="a" style="left:38px;top:625.02px;font-size:11.5px;line-height:15px;color:#a0a5aa;white-space:nowrap;letter-spacing:-0.247px;">Collapse menu</div>
<div class="a" style="left:17px;top:332.52px;font-size:11.5px;line-height:15px;color:#fff;white-space:nowrap;font-weight:bold;letter-spacing:-0.511px;">Contact Forms</div>
<div class="a" style="left:17px;top:357.02px;font-size:11.5px;line-height:15px;color:#b4b9be;white-space:nowrap;letter-spacing:-0.023px;">Add New</div>
<div class="a" style="left:17px;top:381.52px;font-size:11.5px;line-height:15px;color:#b4b9be;white-space:nowrap;letter-spacing:0.059px;">Integration</div>
<div class="a" style="left:17px;top:405.52px;font-size:11.5px;line-height:15px;color:#b4b9be;white-space:nowrap;letter-spacing:-0.405px;">CF7 Skins Settings</div>
<div class="a" style="left:81px;top:477px;width:16px;height:16px;background:#ca4a1f;border-radius:50%"></div>
<div class="a" style="left:86px;top:479.54px;font-size:10px;line-height:13px;color:#fff;white-space:nowrap;">3</div>
<div class="a" style="left:993px;top:97px;width:14px;height:734px;background:#f1f1f1"></div>
<svg class="a" style="left:996.5px;top:103.3px;" width="7" height="4" viewBox="0 0 7 4"><path d="M3.500 0L7 4H0z" fill="#505050"/></svg>
<svg class="a" style="left:996.5px;top:820.5px;" width="7" height="4" viewBox="0 0 7 4"><path d="M3.500 4L7 0H0z" fill="#505050"/></svg>
<div class="a" style="left:994.2px;top:377.7px;width:11.3px;height:261.2px;background:#c1c1c1"></div>
<div class="a" style="left:164.5px;top:134px;width:810.2px;height:700px;background:#fff;border:1px solid #ccd0d4"></div>
<div class="a" style="left:164.5px;top:165.5px;width:810.2px;height:1px;background:#ccd0d4"></div>
<div class="a" style="left:175.5px;top:142.76px;font-size:12.25px;line-height:16px;color:#23282d;white-space:nowrap;letter-spacing:-0.291px;">Skins</div>
<svg class="a" style="left:955px;top:147px;" width="8" height="6" viewBox="0 0 8 6"><path d="M4 .5L7.500 5.500H.5z" fill="#555d66"/></svg>
<div class="a" style="left:181.5px;top:184.5px;width:99.5px;height:31px;background:#d3e498;border:1px solid #c3d488"></div>
<div class="a" style="left:191.5px;top:192.76px;font-size:12.25px;line-height:16px;color:#fff;white-space:nowrap;font-weight:bold;letter-spacing:-0.219px;text-shadow:0 0 1px #fff;">Form</div>
<div class="a" style="left:229px;top:191.75px;width:17.5px;height:17.5px;background:#b5c47d;border-radius:50%"></div>
<div class="a" style="left:235.65px;top:193.82px;font-size:11.5px;line-height:15px;color:#fff;white-space:nowrap;font-weight:bold;">!</div>
<div class="a" style="left:254.25px;top:191.75px;width:17.5px;height:17.5px;background:#b5c47d;border-radius:50%"></div>
<div class="a" style="left:259.3px;top:193.82px;font-size:11.5px;line-height:15px;color:#fff;white-space:nowrap;font-weight:bold;">?</div>
<div class="a" style="left:287.25px;top:184.5px;width:121px;height:30.5px;background:#e5e5e5;border:1px solid #cfcfcf;border-bottom:none"></div>
<div class="a" style="left:297.5px;top:192.76px;font-size:12.25px;line-height:16px;color:#555;white-space:nowrap;font-weight:bold;letter-spacing:-0.203px;">Template</div>
<div class="a" style="left:356.25px;top:191.75px;width:17.5px;height:17.5px;background:#d4d4d4;border-radius:50%"></div>
<div class="a" style="left:362.9px;top:193.82px;font-size:11.5px;line-height:15px;color:#eee;white-space:nowrap;font-weight:bold;">!</div>
<div class="a" style="left:381.25px;top:191.75px;width:17.5px;height:17.5px;background:#d4d4d4;border-radius:50%"></div>
<div class="a" style="left:386.3px;top:193.82px;font-size:11.5px;line-height:15px;color:#eee;white-space:nowrap;font-weight:bold;">?</div>
<div class="a" style="left:414.5px;top:184.5px;width:97.5px;height:30.5px;background:#e5e5e5;border:1px solid #cfcfcf;border-bottom:none"></div>
<div class="a" style="left:425px;top:192.76px;font-size:12.25px;line-height:16px;color:#555;white-space:nowrap;font-weight:bold;letter-spacing:-0.356px;">Style</div>
<div class="a" style="left:460px;top:191.75px;width:17.5px;height:17.5px;background:#d4d4d4;border-radius:50%"></div>
<div class="a" style="left:466.65px;top:193.82px;font-size:11.5px;line-height:15px;color:#eee;white-space:nowrap;font-weight:bold;">!</div>
<div class="a" style="left:485px;top:191.75px;width:17.5px;height:17.5px;background:#d4d4d4;border-radius:50%"></div>
<div class="a" style="left:490.05px;top:193.82px;font-size:11.5px;line-height:15px;color:#eee;white-space:nowrap;font-weight:bold;">?</div>
<div class="a" style="left:538.5px;top:195.02px;font-size:11.5px;line-height:15px;color:#f02020;white-space:nowrap;letter-spacing:0.287px;">Template: [ Contact ]</div>
<div class="a" style="left:662.5px;top:195.02px;font-size:11.5px;line-height:15px;color:#f02020;white-space:nowrap;letter-spacing:0.073px;">Style: [ Bacall (Pro) ]</div>
<div class="a" style="left:882.6px;top:184.5px;width:68.5px;height:30.5px;background:#e5e5e5;border:1px solid #cfcfcf;border-bottom:none"></div>
<div class="a" style="left:892.5px;top:192.76px;font-size:12.25px;line-height:16px;color:#555;white-space:nowrap;font-weight:bold;letter-spacing:-0.096px;">Add-ons</div>
<div class="a" style="left:770.5px;top:212px;width:106px;height:31px;background:#e5e5e5;border:1px solid #cfcfcf;border-bottom:none"></div>
<div class="a" style="left:780px;top:220.26px;font-size:12.25px;line-height:16px;color:#555;white-space:nowrap;font-weight:bold;letter-spacing:-0.099px;">Getting Started</div>
<div class="a" style="left:164.5px;top:242.3px;width:810px;height:589px;background:#d3e498"></div>
<div class="a" style="left:182.5px;top:260.5px;width:91.5px;height:29px;border:1px solid #8a975c;border-radius:3px"></div>
<svg class="a" style="left:194px;top:267px;" width="12" height="15" viewBox="0 0 12 15"><path d="M1 .5h6.500l3.500 3.500v10.500H1z" fill="#6b6b6b"/><path d="M4.500 7.500L3 9.300l1.500 1.800M7.500 7.500L9 9.300l-1.500 1.800" fill="none" stroke="#fff" stroke-width="1"/></svg>
<div class="a" style="left:209.5px;top:267.76px;font-size:12.25px;line-height:16px;color:#444;white-space:nowrap;letter-spacing:-0.675px;">Visual Data</div>
<div class="a" style="left:287px;top:260.5px;width:105px;height:29px;border:1px solid #8a975c;border-radius:3px"></div>
<svg class="a" style="left:297.5px;top:267px;" width="15" height="15" viewBox="0 0 15 15"><path d="M7.500 0l1.200 .1.400 1.900 1.300.5 1.600-1.100 1.700 1.700-1.100 1.600.5 1.300 1.900.4v2.400l-1.900.4-.5 1.300 1.100 1.600-1.700 1.700-1.600-1.100-1.300.5-.4 1.900H6.300l-.4-1.900-1.300-.5-1.600 1.100-1.700-1.700 1.100-1.600-.5-1.300L0 8.700V6.300l1.900-.4.5-1.300L1.300 3 3 1.300l1.600 1.100 1.300-.5.400-1.900z" fill="#555"/><circle cx="7.500" cy="7.500" r="2.600" fill="#d3e498"/></svg>
<div class="a" style="left:313.5px;top:267.76px;font-size:12.25px;line-height:16px;color:#444;white-space:nowrap;letter-spacing:-0.433px;">Form Options</div>
<div class="a" style="left:182.5px;top:306px;width:106.5px;height:29px;background:#9aa86c"></div>
<svg class="a" style="left:190px;top:314.5px;" width="14" height="10" viewBox="0 0 14 10"><path d="M5.600 .500L2 5l3.600 4.500M8.400 .500L12 5l-3.600 4.500" fill="none" stroke="#c9d68a" stroke-width="1.500"/></svg>
<div class="a" style="left:215px;top:311.82px;font-size:11.5px;line-height:15px;color:#f3f6e3;white-space:nowrap;letter-spacing:-0.427px;">Tab 1</div>
<svg class="a" style="left:245.5px;top:314.5px;" width="10" height="10" viewBox="0 0 10 10"><path d="M1.500 1.500l7 7M8.500 1.500L1.500 8.500" stroke="#f3f6e3" stroke-width="2.700"/></svg>
<svg class="a" style="left:262.5px;top:313px;" width="12" height="12" viewBox="0 0 12 12"><path d="M6 .800v10.400M.800 6h10.400" stroke="#f3f6e3" stroke-width="2.700"/></svg>
<div class="a" style="left:292.5px;top:302.5px;width:106.5px;height:33px;background:#fff"></div>
<svg class="a" style="left:301px;top:314px;" width="14" height="10" viewBox="0 0 14 10"><path d="M5.600 .500L2 5l3.600 4.500M8.400 .500L12 5l-3.600 4.500" fill="none" stroke="#555" stroke-width="1.500"/></svg>
<div class="a" style="left:325.5px;top:311.82px;font-size:11.5px;line-height:15px;color:#444;white-space:nowrap;letter-spacing:-0.427px;">Tab 2</div>
<svg class="a" style="left:355.5px;top:314.5px;" width="10" height="10" viewBox="0 0 10 10"><path d="M1.500 1.500l7 7M8.500 1.500L1.500 8.500" stroke="#666" stroke-width="2.700"/></svg>
<svg class="a" style="left:372.5px;top:312.5px;" width="12" height="12" viewBox="0 0 12 12"><path d="M6 .800v10.400M.800 6h10.400" stroke="#666" stroke-width="2.700"/></svg>
<div class="a" style="left:402.5px;top:306px;width:107px;height:29px;background:#9aa86c"></div>
<svg class="a" style="left:411px;top:314.5px;" width="14" height="10" viewBox="0 0 14 10"><path d="M5.600 .500L2 5l3.600 4.500M8.400 .500L12 5l-3.600 4.500" fill="none" stroke="#c9d68a" stroke-width="1.500"/></svg>
<div class="a" style="left:435.5px;top:311.82px;font-size:11.5px;line-height:15px;color:#f3f6e3;white-space:nowrap;letter-spacing:-0.427px;">Tab 3</div>
<svg class="a" style="left:465.5px;top:315px;" width="10" height="10" viewBox="0 0 10 10"><path d="M1.500 1.500l7 7M8.500 1.500L1.500 8.500" stroke="#f3f6e3" stroke-width="2.700"/></svg>
<svg class="a" style="left:482px;top:313px;" width="12" height="12" viewBox="0 0 12 12"><path d="M6 .800v10.400M.800 6h10.400" stroke="#f3f6e3" stroke-width="2.700"/></svg>
<div class="a" style="left:659.5px;top:306px;width:19px;height:20px;background:#fff;border:1px solid #707070;border-radius:3px"></div>
<svg class="a" style="left:664px;top:310px;" width="10" height="12" viewBox="0 0 10 12"><path d="M7.500 1L2.500 6l5 5" fill="none" stroke="#111" stroke-width="1.500"/></svg>
<div class="a" style="left:698px;top:306px;width:19px;height:20px;background:#fff;border:1px solid #707070;border-radius:3px"></div>
<svg class="a" style="left:703px;top:310px;" width="10" height="12" viewBox="0 0 10 12"><path d="M2.500 1L7.500 6l-5 5" fill="none" stroke="#111" stroke-width="1.500"/></svg>
<div class="a" style="left:182.5px;top:335px;width:534.5px;height:497px;background:#fff"></div>
<div class="a" style="left:219px;top:387px;width:1px;height:445px;background:#2b2b2b;box-shadow:0 0 0 .150px #2b2b2b"></div>
<div class="a" style="left:257px;top:396.7px;width:1px;height:27.9px;background:#2b2b2b;box-shadow:0 0 0 .150px #2b2b2b"></div>
<div class="a" style="left:257px;top:440.6px;width:1px;height:391.4px;background:#2b2b2b;box-shadow:0 0 0 .150px #2b2b2b"></div>
<div class="a" style="left:295px;top:450.3px;width:1px;height:349.5px;background:#2b2b2b;box-shadow:0 0 0 .150px #2b2b2b"></div>
<div class="a" style="left:295px;top:494.2px;width:1px;height:91.2px;background:#2b2b2b;box-shadow:0 0 0 .150px #2b2b2b"></div>
<div class="a" style="left:295px;top:601.4px;width:1px;height:91.2px;background:#2b2b2b;box-shadow:0 0 0 .150px #2b2b2b"></div>
<div class="a" style="left:295px;top:708.6px;width:1px;height:91.2px;background:#2b2b2b;box-shadow:0 0 0 .150px #2b2b2b"></div>
<div class="a" style="left:238.4px;top:361.2px;width:273.6px;height:36px;background:#e4eff5;border:1px solid #bfc4c6;border-radius:2px"></div>
<div class="a" style="left:238.4px;top:361.2px;width:38px;height:36px;background:#d9d9d9;border:1px solid #bbb;border-radius:2px 0 0 2px"></div>
<div class="a" style="left:250.8px;top:373.4px;width:12.4px;height:2.4px;background:#fff"></div>
<div class="a" style="left:250.8px;top:378.3px;width:12.4px;height:2.4px;background:#fff"></div>
<div class="a" style="left:250.8px;top:383.2px;width:12.4px;height:2.4px;background:#fff"></div>
<div class="a" style="left:210.8px;top:371.1px;width:16px;height:16px;background:#fff;border:1.400px solid #2b2b2b;border-radius:50%"></div>
<div class="a" style="left:215.3px;top:378.3px;width:7px;height:1.6px;background:#7a7a7a"></div>
<div class="a" style="left:227px;top:379px;width:11.4px;height:1px;background:#2b2b2b;box-shadow:0 0 0 .150px #2b2b2b"></div>
<svg class="a" style="left:286px;top:374.5px;" width="14" height="12" viewBox="0 0 14 12"><path d="M1 2.500h4l1.200 1.500H13v7.500H1z" fill="none" stroke="#666" stroke-width="1"/><path d="M1 5.500h12" stroke="#666" stroke-width="1"/></svg>
<div class="a" style="left:310.7px;top:372.02px;font-size:11.5px;line-height:15px;color:#555;white-space:nowrap;letter-spacing:-0.274px;">Your Details</div>
<div class="a" style="left:388.7px;top:371.69px;font-size:11px;line-height:14px;color:#999;white-space:nowrap;letter-spacing:-1.034px;">FIELDSET</div>
<svg class="a" style="left:443.5px;top:370px;" width="15.4" height="16.5" viewBox="0 0 14 15"><path d="M1 3.300h8.300L5.500 7.100 4.900 10.400l3.300-.6 3.300-3.300V14.500H1z" fill="#707070"/><path d="M6.100 9.300l.5-2L12 1.900a.7.700 0 0 1 1 0l.8.800a.7.700 0 0 1 0 1L8.400 9.100z" fill="#707070"/></svg>
<svg class="a" style="left:465.5px;top:371.5px;" width="13" height="15" viewBox="0 0 13 15"><path d="M4 1h8.500v10.500H4z" fill="#707070"/><path d="M2 3.500v10h8" fill="none" stroke="#707070" stroke-width="1.500"/></svg>
<svg class="a" style="left:486.3px;top:371.5px;" width="15" height="15" viewBox="0 0 15 15"><circle cx="7.500" cy="7.500" r="7" fill="#707070"/><path d="M4.800 4.800l5.400 5.400M10.200 4.800l-5.400 5.400" stroke="#fff" stroke-width="2"/></svg>
<div class="a" style="left:276px;top:414.8px;width:288.7px;height:36px;background:#e4eff5;border:1px solid #bfc4c6;border-radius:2px"></div>
<div class="a" style="left:276px;top:414.8px;width:38px;height:36px;background:#d9d9d9;border:1px solid #bbb;border-radius:2px 0 0 2px"></div>
<div class="a" style="left:288.4px;top:427px;width:12.4px;height:2.4px;background:#fff"></div>
<div class="a" style="left:288.4px;top:431.9px;width:12.4px;height:2.4px;background:#fff"></div>
<div class="a" style="left:288.4px;top:436.8px;width:12.4px;height:2.4px;background:#fff"></div>
<div class="a" style="left:248.7px;top:424.7px;width:16px;height:16px;background:#fff;border:1.400px solid #2b2b2b;border-radius:50%"></div>
<div class="a" style="left:253.2px;top:431.9px;width:7px;height:1.6px;background:#7a7a7a"></div>
<div class="a" style="left:265px;top:432px;width:11px;height:1px;background:#2b2b2b;box-shadow:0 0 0 .150px #2b2b2b"></div>
<svg class="a" style="left:325.9px;top:424.4px;" width="13" height="12.5" viewBox="0 0 13 12.5"><rect x="0.500" y="0.7" width="1.200" height="2.600" fill="#666"/><path d="M4 2h8.500" stroke="#666" stroke-width="1"/><rect x="0.500" y="4.9" width="1.200" height="2.600" fill="#666"/><path d="M4 6.2h8.500" stroke="#666" stroke-width="1"/><rect x="0.500" y="9.1" width="1.200" height="2.600" fill="#666"/><path d="M4 10.4h8.500" stroke="#666" stroke-width="1"/></svg>
<div class="a" style="left:426.5px;top:424.99px;font-size:11px;line-height:14px;color:#8f8f8f;white-space:nowrap;letter-spacing:-0.352px;">LIST-OL</div>
<svg class="a" style="left:474.9px;top:423.6px;" width="15.4" height="16.5" viewBox="0 0 14 15"><path d="M1 3.300h8.300L5.500 7.100 4.900 10.400l3.300-.6 3.300-3.300V14.500H1z" fill="#707070"/><path d="M6.100 9.300l.5-2L12 1.900a.7.700 0 0 1 1 0l.8.800a.7.700 0 0 1 0 1L8.400 9.100z" fill="#707070"/></svg>
<svg class="a" style="left:496.5px;top:425.1px;" width="13" height="15" viewBox="0 0 13 15"><path d="M4 1h8.500v10.500H4z" fill="#707070"/><path d="M2 3.500v10h8" fill="none" stroke="#707070" stroke-width="1.500"/></svg>
<svg class="a" style="left:518px;top:425.1px;" width="15" height="15" viewBox="0 0 15 15"><circle cx="7.500" cy="7.500" r="7" fill="#707070"/><path d="M4.800 4.800l5.400 5.400M10.200 4.800l-5.400 5.400" stroke="#fff" stroke-width="2"/></svg>
<svg class="a" style="left:541.2px;top:428.6px;" width="12" height="8" viewBox="0 0 12 8"><path d="M1 1.500L6 6.500l5-5" fill="none" stroke="#707070" stroke-width="1.500"/></svg>
<div class="a" style="left:314.3px;top:468.4px;width:283.5px;height:36px;background:#e4eff5;border:1px solid #bfc4c6;border-radius:2px"></div>
<div class="a" style="left:314.3px;top:468.4px;width:38px;height:36px;background:#d9d9d9;border:1px solid #bbb;border-radius:2px 0 0 2px"></div>
<div class="a" style="left:326.7px;top:480.6px;width:12.4px;height:2.4px;background:#fff"></div>
<div class="a" style="left:326.7px;top:485.5px;width:12.4px;height:2.4px;background:#fff"></div>
<div class="a" style="left:326.7px;top:490.4px;width:12.4px;height:2.4px;background:#fff"></div>
<div class="a" style="left:286.7px;top:478.3px;width:16px;height:16px;background:#fff;border:1.400px solid #2b2b2b;border-radius:50%"></div>
<div class="a" style="left:291.2px;top:485.5px;width:7px;height:1.6px;background:#7a7a7a"></div>
<div class="a" style="left:303px;top:486px;width:11.3px;height:1px;background:#2b2b2b;box-shadow:0 0 0 .150px #2b2b2b"></div>
<svg class="a" style="left:363.5px;top:478.5px;" width="13" height="12.5" viewBox="0 0 13 12.5"><circle cx="1.300" cy="2" r="1.200" fill="#555"/><path d="M4 2h8.500" stroke="#666" stroke-width="1"/><circle cx="1.300" cy="6.2" r="1.200" fill="#555"/><path d="M4 6.2h8.500" stroke="#666" stroke-width="1"/><circle cx="1.300" cy="10.4" r="1.200" fill="#555"/><path d="M4 10.4h8.500" stroke="#666" stroke-width="1"/></svg>
<div class="a" style="left:464.6px;top:477.89px;font-size:11px;line-height:14px;color:#8f8f8f;white-space:nowrap;letter-spacing:-0.437px;">LIST-LI</div>
<svg class="a" style="left:507px;top:477.2px;" width="15.4" height="16.5" viewBox="0 0 14 15"><path d="M1 3.300h8.300L5.500 7.100 4.900 10.400l3.300-.6 3.300-3.300V14.500H1z" fill="#707070"/><path d="M6.100 9.300l.5-2L12 1.900a.7.700 0 0 1 1 0l.8.800a.7.700 0 0 1 0 1L8.400 9.100z" fill="#707070"/></svg>
<svg class="a" style="left:529.3px;top:478.7px;" width="13" height="15" viewBox="0 0 13 15"><path d="M4 1h8.500v10.500H4z" fill="#707070"/><path d="M2 3.500v10h8" fill="none" stroke="#707070" stroke-width="1.500"/></svg>
<svg class="a" style="left:550.5px;top:478.7px;" width="15" height="15" viewBox="0 0 15 15"><circle cx="7.500" cy="7.500" r="7" fill="#707070"/><path d="M4.800 4.800l5.400 5.400M10.200 4.800l-5.400 5.400" stroke="#fff" stroke-width="2"/></svg>
<svg class="a" style="left:573.7px;top:482.2px;" width="12" height="8" viewBox="0 0 12 8"><path d="M1 1.500L6 6.500l5-5" fill="none" stroke="#707070" stroke-width="1.500"/></svg>
<div class="a" style="left:333px;top:503.9px;width:1px;height:35.9px;background:#2b2b2b;box-shadow:0 0 0 .150px #2b2b2b"></div>
<div class="a" style="left:333px;top:540px;width:19.4px;height:1px;background:#2b2b2b;box-shadow:0 0 0 .150px #2b2b2b"></div>
<div class="a" style="left:314.3px;top:575.6px;width:283.5px;height:36px;background:#e4eff5;border:1px solid #bfc4c6;border-radius:2px"></div>
<div class="a" style="left:314.3px;top:575.6px;width:38px;height:36px;background:#d9d9d9;border:1px solid #bbb;border-radius:2px 0 0 2px"></div>
<div class="a" style="left:326.7px;top:587.8px;width:12.4px;height:2.4px;background:#fff"></div>
<div class="a" style="left:326.7px;top:592.7px;width:12.4px;height:2.4px;background:#fff"></div>
<div class="a" style="left:326.7px;top:597.6px;width:12.4px;height:2.4px;background:#fff"></div>
<div class="a" style="left:286.7px;top:585.5px;width:16px;height:16px;background:#fff;border:1.400px solid #2b2b2b;border-radius:50%"></div>
<div class="a" style="left:291.2px;top:592.7px;width:7px;height:1.6px;background:#7a7a7a"></div>
<div class="a" style="left:303px;top:593px;width:11.3px;height:1px;background:#2b2b2b;box-shadow:0 0 0 .150px #2b2b2b"></div>
<svg class="a" style="left:363.5px;top:585.7px;" width="13" height="12.5" viewBox="0 0 13 12.5"><circle cx="1.300" cy="2" r="1.200" fill="#555"/><path d="M4 2h8.500" stroke="#666" stroke-width="1"/><circle cx="1.300" cy="6.2" r="1.200" fill="#555"/><path d="M4 6.2h8.500" stroke="#666" stroke-width="1"/><circle cx="1.300" cy="10.4" r="1.200" fill="#555"/><path d="M4 10.4h8.500" stroke="#666" stroke-width="1"/></svg>
<div class="a" style="left:464.6px;top:585.09px;font-size:11px;line-height:14px;color:#8f8f8f;white-space:nowrap;letter-spacing:-0.437px;">LIST-LI</div>
<svg class="a" style="left:507px;top:584.4px;" width="15.4" height="16.5" viewBox="0 0 14 15"><path d="M1 3.300h8.300L5.500 7.100 4.900 10.400l3.300-.6 3.300-3.300V14.500H1z" fill="#707070"/><path d="M6.100 9.300l.5-2L12 1.900a.7.700 0 0 1 1 0l.8.800a.7.700 0 0 1 0 1L8.400 9.100z" fill="#707070"/></svg>
<svg class="a" style="left:529.3px;top:585.9px;" width="13" height="15" viewBox="0 0 13 15"><path d="M4 1h8.500v10.500H4z" fill="#707070"/><path d="M2 3.500v10h8" fill="none" stroke="#707070" stroke-width="1.500"/></svg>
<svg class="a" style="left:550.5px;top:585.9px;" width="15" height="15" viewBox="0 0 15 15"><circle cx="7.500" cy="7.500" r="7" fill="#707070"/><path d="M4.800 4.800l5.400 5.400M10.200 4.800l-5.400 5.400" stroke="#fff" stroke-width="2"/></svg>
<svg class="a" style="left:573.7px;top:589.4px;" width="12" height="8" viewBox="0 0 12 8"><path d="M1 1.500L6 6.500l5-5" fill="none" stroke="#707070" stroke-width="1.500"/></svg>
<div class="a" style="left:333px;top:611.1px;width:1px;height:35.9px;background:#2b2b2b;box-shadow:0 0 0 .150px #2b2b2b"></div>
<div class="a" style="left:333px;top:647px;width:19.4px;height:1px;background:#2b2b2b;box-shadow:0 0 0 .150px #2b2b2b"></div>
<div class="a" style="left:314.3px;top:682.8px;width:283.5px;height:36px;background:#e4eff5;border:1px solid #bfc4c6;border-radius:2px"></div>
<div class="a" style="left:314.3px;top:682.8px;width:38px;height:36px;background:#d9d9d9;border:1px solid #bbb;border-radius:2px 0 0 2px"></div>
<div class="a" style="left:326.7px;top:695px;width:12.4px;height:2.4px;background:#fff"></div>
<div class="a" style="left:326.7px;top:699.9px;width:12.4px;height:2.4px;background:#fff"></div>
<div class="a" style="left:326.7px;top:704.8px;width:12.4px;height:2.4px;background:#fff"></div>
<div class="a" style="left:286.7px;top:692.7px;width:16px;height:16px;background:#fff;border:1.400px solid #2b2b2b;border-radius:50%"></div>
<div class="a" style="left:291.2px;top:699.9px;width:7px;height:1.6px;background:#7a7a7a"></div>
<div class="a" style="left:303px;top:700px;width:11.3px;height:1px;background:#2b2b2b;box-shadow:0 0 0 .150px #2b2b2b"></div>
<svg class="a" style="left:363.5px;top:692.9px;" width="13" height="12.5" viewBox="0 0 13 12.5"><circle cx="1.300" cy="2" r="1.200" fill="#555"/><path d="M4 2h8.500" stroke="#666" stroke-width="1"/><circle cx="1.300" cy="6.2" r="1.200" fill="#555"/><path d="M4 6.2h8.500" stroke="#666" stroke-width="1"/><circle cx="1.300" cy="10.4" r="1.200" fill="#555"/><path d="M4 10.4h8.500" stroke="#666" stroke-width="1"/></svg>
<div class="a" style="left:464.6px;top:692.29px;font-size:11px;line-height:14px;color:#8f8f8f;white-space:nowrap;letter-spacing:-0.437px;">LIST-LI</div>
<svg class="a" style="left:507px;top:691.6px;" width="15.4" height="16.5" viewBox="0 0 14 15"><path d="M1 3.300h8.300L5.500 7.100 4.900 10.400l3.300-.6 3.300-3.300V14.500H1z" fill="#707070"/><path d="M6.100 9.300l.5-2L12 1.900a.7.700 0 0 1 1 0l.8.800a.7.700 0 0 1 0 1L8.400 9.100z" fill="#707070"/></svg>
<svg class="a" style="left:529.3px;top:693.1px;" width="13" height="15" viewBox="0 0 13 15"><path d="M4 1h8.500v10.500H4z" fill="#707070"/><path d="M2 3.500v10h8" fill="none" stroke="#707070" stroke-width="1.500"/></svg>
<svg class="a" style="left:550.5px;top:693.1px;" width="15" height="15" viewBox="0 0 15 15"><circle cx="7.500" cy="7.500" r="7" fill="#707070"/><path d="M4.800 4.800l5.400 5.400M10.200 4.800l-5.400 5.400" stroke="#fff" stroke-width="2"/></svg>
<svg class="a" style="left:573.7px;top:696.6px;" width="12" height="8" viewBox="0 0 12 8"><path d="M1 1.500L6 6.500l5-5" fill="none" stroke="#707070" stroke-width="1.500"/></svg>
<div class="a" style="left:333px;top:718.3px;width:1px;height:35.9px;background:#2b2b2b;box-shadow:0 0 0 .150px #2b2b2b"></div>
<div class="a" style="left:333px;top:754px;width:19.4px;height:1px;background:#2b2b2b;box-shadow:0 0 0 .150px #2b2b2b"></div>
<div class="a" style="left:314.3px;top:790px;width:283.5px;height:36px;background:#e4eff5;border:1px solid #bfc4c6;border-radius:2px"></div>
<div class="a" style="left:314.3px;top:790px;width:38px;height:36px;background:#d9d9d9;border:1px solid #bbb;border-radius:2px 0 0 2px"></div>
<div class="a" style="left:326.7px;top:802.2px;width:12.4px;height:2.4px;background:#fff"></div>
<div class="a" style="left:326.7px;top:807.1px;width:12.4px;height:2.4px;background:#fff"></div>
<div class="a" style="left:326.7px;top:812px;width:12.4px;height:2.4px;background:#fff"></div>
<div class="a" style="left:286.7px;top:799.9px;width:16px;height:16px;background:#fff;border:1.400px solid #2b2b2b;border-radius:50%"></div>
<div class="a" style="left:291.2px;top:807.1px;width:7px;height:1.6px;background:#7a7a7a"></div>
<div class="a" style="left:303px;top:808px;width:11.3px;height:1px;background:#2b2b2b;box-shadow:0 0 0 .150px #2b2b2b"></div>
<svg class="a" style="left:363.5px;top:800.1px;" width="13" height="12.5" viewBox="0 0 13 12.5"><circle cx="1.300" cy="2" r="1.200" fill="#555"/><path d="M4 2h8.500" stroke="#666" stroke-width="1"/><circle cx="1.300" cy="6.2" r="1.200" fill="#555"/><path d="M4 6.2h8.500" stroke="#666" stroke-width="1"/><circle cx="1.300" cy="10.4" r="1.200" fill="#555"/><path d="M4 10.4h8.500" stroke="#666" stroke-width="1"/></svg>
<div class="a" style="left:464.6px;top:799.49px;font-size:11px;line-height:14px;color:#8f8f8f;white-space:nowrap;letter-spacing:-0.437px;">LIST-LI</div>
<svg class="a" style="left:507px;top:798.8px;" width="15.4" height="16.5" viewBox="0 0 14 15"><path d="M1 3.300h8.300L5.500 7.100 4.900 10.400l3.300-.6 3.300-3.300V14.500H1z" fill="#707070"/><path d="M6.100 9.300l.5-2L12 1.900a.7.700 0 0 1 1 0l.8.800a.7.700 0 0 1 0 1L8.400 9.100z" fill="#707070"/></svg>
<svg class="a" style="left:529.3px;top:800.3px;" width="13" height="15" viewBox="0 0 13 15"><path d="M4 1h8.500v10.500H4z" fill="#707070"/><path d="M2 3.500v10h8" fill="none" stroke="#707070" stroke-width="1.500"/></svg>
<svg class="a" style="left:550.5px;top:800.3px;" width="15" height="15" viewBox="0 0 15 15"><circle cx="7.500" cy="7.500" r="7" fill="#707070"/><path d="M4.800 4.800l5.400 5.400M10.200 4.800l-5.400 5.400" stroke="#fff" stroke-width="2"/></svg>
<svg class="a" style="left:573.7px;top:803.8px;" width="12" height="8" viewBox="0 0 12 8"><path d="M1 1.500L6 6.500l5-5" fill="none" stroke="#707070" stroke-width="1.500"/></svg>
<div class="a" style="left:333px;top:825.5px;width:1px;height:6.5px;background:#2b2b2b;box-shadow:0 0 0 .150px #2b2b2b"></div>
<div class="a" style="left:352.4px;top:522px;width:334.5px;height:36px;background:#c9f1ab;border:1px solid #bfc4c6;border-radius:2px"></div>
<div class="a" style="left:352.4px;top:522px;width:38px;height:36px;background:#d9d9d9;border:1px solid #bbb;border-radius:2px 0 0 2px"></div>
<div class="a" style="left:364.8px;top:534.2px;width:12.4px;height:2.4px;background:#fff"></div>
<div class="a" style="left:364.8px;top:539.1px;width:12.4px;height:2.4px;background:#fff"></div>
<div class="a" style="left:364.8px;top:544px;width:12.4px;height:2.4px;background:#fff"></div>
<div class="a" style="left:399.4px;top:536.38px;font-size:9.3px;line-height:12px;color:#555;white-space:nowrap;font-weight:bold;letter-spacing:0.502px;">A-Z</div>
<div class="a" style="left:425px;top:533.42px;font-size:11.5px;line-height:15px;color:#444;white-space:nowrap;letter-spacing:-0.344px;">Name</div>
<div class="a" style="left:502.7px;top:525.5px;width:83.7px;height:29px;background:#d9f6c6;border:1px solid #5a5a5a;border-radius:3px"></div>
<div class="a" style="left:504px;top:531.55px;font-size:14.3px;line-height:19px;color:#333;white-space:nowrap;letter-spacing:-1.887px;">TEXT</div>
<svg class="a" style="left:568.5px;top:537.3px;" width="11" height="8" viewBox="0 0 11 8"><path d="M1.500 1.500L5.500 5.500l4-4" fill="none" stroke="#333" stroke-width="1.400"/></svg>
<svg class="a" style="left:596.7px;top:525.8px;" width="15.4" height="16.5" viewBox="0 0 14 15"><path d="M1 3.300h8.300L5.500 7.100 4.900 10.400l3.300-.6 3.300-3.300V14.500H1z" fill="#707070"/><path d="M6.100 9.300l.5-2L12 1.900a.7.700 0 0 1 1 0l.8.800a.7.700 0 0 1 0 1L8.400 9.100z" fill="#707070"/></svg>
<svg class="a" style="left:618.5px;top:527.3px;" width="13" height="15" viewBox="0 0 13 15"><path d="M4 1h8.500v10.500H4z" fill="#707070"/><path d="M2 3.500v10h8" fill="none" stroke="#707070" stroke-width="1.500"/></svg>
<svg class="a" style="left:639.5px;top:527.3px;" width="15" height="15" viewBox="0 0 15 15"><circle cx="7.500" cy="7.500" r="7" fill="#707070"/><path d="M4.800 4.800l5.400 5.400M10.200 4.800l-5.400 5.400" stroke="#fff" stroke-width="2"/></svg>
<svg class="a" style="left:662.7px;top:530.8px;" width="12" height="8" viewBox="0 0 12 8"><path d="M1 1.500L6 6.500l5-5" fill="none" stroke="#707070" stroke-width="1.500"/></svg>
<div class="a" style="left:352.4px;top:629.2px;width:334.5px;height:36px;background:#c9f1ab;border:1px solid #bfc4c6;border-radius:2px"></div>
<div class="a" style="left:352.4px;top:629.2px;width:38px;height:36px;background:#d9d9d9;border:1px solid #bbb;border-radius:2px 0 0 2px"></div>
<div class="a" style="left:364.8px;top:641.4px;width:12.4px;height:2.4px;background:#fff"></div>
<div class="a" style="left:364.8px;top:646.3px;width:12.4px;height:2.4px;background:#fff"></div>
<div class="a" style="left:364.8px;top:651.2px;width:12.4px;height:2.4px;background:#fff"></div>
<svg class="a" style="left:400.5px;top:644.5px;" width="14" height="10" viewBox="0 0 14 10"><rect x=".600" y=".600" width="12.800" height="8.800" rx="1" fill="none" stroke="#555" stroke-width="1.100"/><path d="M2.500 2.800l4.500 3.400 4.500-3.400" fill="none" stroke="#555" stroke-width="1"/></svg>
<div class="a" style="left:425px;top:640.62px;font-size:11.5px;line-height:15px;color:#444;white-space:nowrap;letter-spacing:-0.491px;">Email</div>
<div class="a" style="left:502.7px;top:632.7px;width:83.7px;height:29px;background:#d9f6c6;border:1px solid #5a5a5a;border-radius:3px"></div>
<div class="a" style="left:504px;top:638.75px;font-size:14.3px;line-height:19px;color:#333;white-space:nowrap;letter-spacing:-0.747px;">EMAIL*</div>
<svg class="a" style="left:568.5px;top:644.5px;" width="11" height="8" viewBox="0 0 11 8"><path d="M1.500 1.500L5.500 5.500l4-4" fill="none" stroke="#333" stroke-width="1.400"/></svg>
<svg class="a" style="left:596.7px;top:633px;" width="15.4" height="16.5" viewBox="0 0 14 15"><path d="M1 3.300h8.300L5.500 7.100 4.900 10.400l3.300-.6 3.300-3.300V14.500H1z" fill="#707070"/><path d="M6.100 9.300l.5-2L12 1.900a.7.700 0 0 1 1 0l.8.800a.7.700 0 0 1 0 1L8.400 9.100z" fill="#707070"/></svg>
<svg class="a" style="left:618.5px;top:634.5px;" width="13" height="15" viewBox="0 0 13 15"><path d="M4 1h8.500v10.500H4z" fill="#707070"/><path d="M2 3.500v10h8" fill="none" stroke="#707070" stroke-width="1.500"/></svg>
<svg class="a" style="left:639.5px;top:634.5px;" width="15" height="15" viewBox="0 0 15 15"><circle cx="7.500" cy="7.500" r="7" fill="#707070"/><path d="M4.800 4.800l5.400 5.400M10.200 4.800l-5.400 5.400" stroke="#fff" stroke-width="2"/></svg>
<svg class="a" style="left:662.7px;top:638px;" width="12" height="8" viewBox="0 0 12 8"><path d="M1 1.500L6 6.500l5-5" fill="none" stroke="#707070" stroke-width="1.500"/></svg>
<div class="a" style="left:352.4px;top:736.4px;width:334.5px;height:36px;background:#c9f1ab;border:1px solid #bfc4c6;border-radius:2px"></div>
<div class="a" style="left:352.4px;top:736.4px;width:38px;height:36px;background:#d9d9d9;border:1px solid #bbb;border-radius:2px 0 0 2px"></div>
<div class="a" style="left:364.8px;top:748.6px;width:12.4px;height:2.4px;background:#fff"></div>
<div class="a" style="left:364.8px;top:753.5px;width:12.4px;height:2.4px;background:#fff"></div>
<div class="a" style="left:364.8px;top:758.4px;width:12.4px;height:2.4px;background:#fff"></div>
<svg class="a" style="left:401px;top:748.7px;" width="13" height="13" viewBox="0 0 13 13"><path d="M9.500 1l2.300 1.800c.5 3.500-3.500 8.500-8.500 9.200L1.500 10l2.300-1.800 1.200 1c2-.9 3.800-3 4.300-5.200l-1.300-.8z" fill="#555"/></svg>
<div class="a" style="left:425px;top:747.82px;font-size:11.5px;line-height:15px;color:#444;white-space:nowrap;letter-spacing:-0.351px;">Phone</div>
<div class="a" style="left:502.7px;top:739.9px;width:83.7px;height:29px;background:#d9f6c6;border:1px solid #5a5a5a;border-radius:3px"></div>
<div class="a" style="left:504px;top:745.95px;font-size:14.3px;line-height:19px;color:#333;white-space:nowrap;letter-spacing:-1.909px;">TEL</div>
<svg class="a" style="left:568.5px;top:751.7px;" width="11" height="8" viewBox="0 0 11 8"><path d="M1.500 1.500L5.500 5.500l4-4" fill="none" stroke="#333" stroke-width="1.400"/></svg>
<svg class="a" style="left:596.7px;top:740.2px;" width="15.4" height="16.5" viewBox="0 0 14 15"><path d="M1 3.300h8.300L5.500 7.100 4.900 10.400l3.300-.6 3.300-3.300V14.500H1z" fill="#707070"/><path d="M6.100 9.300l.5-2L12 1.900a.7.700 0 0 1 1 0l.8.800a.7.700 0 0 1 0 1L8.400 9.100z" fill="#707070"/></svg>
<svg class="a" style="left:618.5px;top:741.7px;" width="13" height="15" viewBox="0 0 13 15"><path d="M4 1h8.500v10.500H4z" fill="#707070"/><path d="M2 3.500v10h8" fill="none" stroke="#707070" stroke-width="1.500"/></svg>
<svg class="a" style="left:639.5px;top:741.7px;" width="15" height="15" viewBox="0 0 15 15"><circle cx="7.500" cy="7.500" r="7" fill="#707070"/><path d="M4.800 4.800l5.400 5.400M10.200 4.800l-5.400 5.400" stroke="#fff" stroke-width="2"/></svg>
<svg class="a" style="left:662.7px;top:745.2px;" width="12" height="8" viewBox="0 0 12 8"><path d="M1 1.500L6 6.500l5-5" fill="none" stroke="#707070" stroke-width="1.500"/></svg>
<div class="a" style="left:200px;top:352px;width:499.7px;height:53.6px;background:rgba(111,168,220,.66)"></div>
<div class="a" style="left:200px;top:321.3px;width:134px;height:24.5px;background:#fff;border-radius:3px;box-shadow:0 1px 4px rgba(0,0,0,.35)"></div>
<svg class="a" style="left:209px;top:345px;" width="12" height="7" viewBox="0 0 12 7"><path d="M0 0h12L6 7z" fill="#fff"/></svg>
<div class="a" style="left:208px;top:327.02px;font-size:11.5px;line-height:15px;color:#881280;white-space:nowrap;font-weight:bold;letter-spacing:-0.372px;">div</div>
<div class="a" style="left:223.5px;top:327.02px;font-size:11.5px;line-height:15px;color:#1a1aa6;white-space:nowrap;font-weight:bold;letter-spacing:-0.516px;">.rst__node</div>
<div class="a" style="left:285px;top:327.69px;font-size:11px;line-height:14px;color:#777;white-space:nowrap;letter-spacing:-0.141px;">578 × 62</div>
<div class="a" style="left:731.8px;top:260.7px;width:225.2px;height:572px;background:#fff"></div>
<div class="a" style="left:745.8px;top:285.27px;font-size:14.8px;line-height:19px;color:#23282d;white-space:nowrap;letter-spacing:-0.929px;">FIELDS (CF7 TAGS)</div>
<div class="a" style="left:916.2px;top:284px;width:28px;height:19px;background:#dcdcdc;border:1px solid #d0d0d0"></div>
<div class="a" style="left:927.5px;top:288.21px;font-size:9.5px;line-height:12px;color:#fff;white-space:nowrap;font-weight:bold;">?</div>
<div class="a" style="left:745px;top:321.9px;width:90.6px;height:64.1px;background:#f7f7f7;border:1px solid #dfdfdf;box-shadow:0 1px 1px rgba(0,0,0,.06)"></div>
<svg class="a" style="left:754.3px;top:332.1px;" width="14" height="14" viewBox="0 0 14 14"><g transform="rotate(-28 7 7)" fill="none" stroke="#0071a1" stroke-width="1.150" stroke-linejoin="round"><path d="M1.500 7.200h2.600v5.600H1.500z"/><path d="M4.100 7.800L6.600 3.200c.3-1 1.900-.8 1.800.5L8 6.200h3.200c1 0 1.400.8 1.200 1.500l-.8 4c-.2.700-.700 1-1.400 1H4.100"/></g></svg>
<div class="a" style="left:781.6px;top:330.96px;font-size:12.25px;line-height:16px;color:#444;white-space:nowrap;letter-spacing:-0.537px;">Accepta</div>
<div class="a" style="left:781.6px;top:346.56px;font-size:12.25px;line-height:16px;color:#444;white-space:nowrap;letter-spacing:-0.560px;">nce</div>
<div class="a" style="left:781.6px;top:362.16px;font-size:12.25px;line-height:16px;color:#444;white-space:nowrap;letter-spacing:-0.456px;">(confirm)</div>
<div class="a" style="left:745px;top:395.3px;width:90.6px;height:33px;background:#f7f7f7;border:1px solid #dfdfdf;box-shadow:0 1px 1px rgba(0,0,0,.06)"></div>
<svg class="a" style="left:754.3px;top:405.5px;" width="14" height="14" viewBox="0 0 14 14"><rect x="1.500" y="4.500" width="11" height="8.500" rx="1" fill="none" stroke="#0071a1" stroke-width="1.300"/><path d="M1.500 7.200h11" stroke="#0071a1" stroke-width="1.200"/><path d="M4.300 2.200v3M9.700 2.200v3" stroke="#0071a1" stroke-width="2.600" stroke-linecap="round"/></svg>
<div class="a" style="left:781.6px;top:404.36px;font-size:12.25px;line-height:16px;color:#444;white-space:nowrap;letter-spacing:-0.550px;">Date</div>
<div class="a" style="left:745px;top:437.6px;width:90.6px;height:48.7px;background:#f7f7f7;border:1px solid #dfdfdf;box-shadow:0 1px 1px rgba(0,0,0,.06)"></div>
<svg class="a" style="left:754.3px;top:447.8px;" width="14" height="14" viewBox="0 0 14 14"><path d="M4 9.500l5-5a1.800 1.800 0 0 1 2.500 2.500l-5.500 5.500a3 3 0 0 1-4-4L7 3.500" fill="none" stroke="#0071a1" stroke-width="1.300" transform="rotate(10 7 7)"/></svg>
<div class="a" style="left:781.6px;top:446.66px;font-size:12.25px;line-height:16px;color:#444;white-space:nowrap;letter-spacing:-0.419px;">File</div>
<div class="a" style="left:781.6px;top:462.26px;font-size:12.25px;line-height:16px;color:#444;white-space:nowrap;letter-spacing:-0.478px;">(upload)</div>
<div class="a" style="left:745px;top:495.6px;width:90.6px;height:33.3px;background:#f7f7f7;border:1px solid #dfdfdf;box-shadow:0 1px 1px rgba(0,0,0,.06)"></div>
<svg class="a" style="left:754.3px;top:505.8px;" width="14" height="14" viewBox="0 0 14 14"><path d="M7 1a4.300 4.300 0 0 0-2.300 8v1.500h4.600V9A4.300 4.300 0 0 0 7 1z" fill="none" stroke="#0071a1" stroke-width="1.200"/><path d="M5.300 12h3.400M6 13.500h2" stroke="#0071a1" stroke-width="1.100"/></svg>
<div class="a" style="left:781.6px;top:504.66px;font-size:12.25px;line-height:16px;color:#444;white-space:nowrap;letter-spacing:-0.535px;">Quiz</div>
<div class="a" style="left:745px;top:537.8px;width:90.6px;height:64px;background:#f7f7f7;border:1px solid #dfdfdf;box-shadow:0 1px 1px rgba(0,0,0,.06)"></div>
<svg class="a" style="left:754.3px;top:548px;" width="14" height="14" viewBox="0 0 14 14"><path d="M1.500 3h11M1.500 7h11M1.500 11h11" stroke="#0071a1" stroke-width="2.200"/></svg>
<div class="a" style="left:781.6px;top:546.86px;font-size:12.25px;line-height:16px;color:#444;white-space:nowrap;letter-spacing:-0.482px;">Select</div>
<div class="a" style="left:781.6px;top:562.46px;font-size:12.25px;line-height:16px;color:#444;white-space:nowrap;letter-spacing:-0.513px;">(dropdo</div>
<div class="a" style="left:781.6px;top:578.06px;font-size:12.25px;line-height:16px;color:#444;white-space:nowrap;letter-spacing:-0.559px;">wn)</div>
<div class="a" style="left:745px;top:611.7px;width:90.6px;height:48.4px;background:#f7f7f7;border:1px solid #dfdfdf;box-shadow:0 1px 1px rgba(0,0,0,.06)"></div>
<svg class="a" style="left:754.3px;top:621.9px;" width="14" height="14" viewBox="0 0 14 14"><path d="M10 1l2.300 1.800c.5 3.500-3.500 8.500-8.500 9.200L2 10l2.300-1.800 1.200 1c2-.9 3.800-3 4.300-5.200l-1.300-.8z" fill="#0071a1"/></svg>
<div class="a" style="left:781.6px;top:620.76px;font-size:12.25px;line-height:16px;color:#444;white-space:nowrap;letter-spacing:-0.528px;">Telephon</div>
<div class="a" style="left:781.6px;top:636.36px;font-size:12.25px;line-height:16px;color:#444;white-space:nowrap;letter-spacing:-0.579px;">e</div>
<div class="a" style="left:745px;top:670px;width:90.6px;height:63.6px;background:#f7f7f7;border:1px solid #dfdfdf;box-shadow:0 1px 1px rgba(0,0,0,.06)"></div>
<svg class="a" style="left:754.3px;top:680.2px;" width="14" height="14" viewBox="0 0 14 14"><rect x="1.500" y="1" width="11" height="12" rx="1.500" fill="none" stroke="#0071a1" stroke-width="1.200"/><path d="M3.800 4.500h6.400M3.800 7h6.400M3.800 9.500h6.400" stroke="#0071a1" stroke-width="1"/></svg>
<div class="a" style="left:781.6px;top:679.06px;font-size:12.25px;line-height:16px;color:#444;white-space:nowrap;letter-spacing:-0.499px;">Textarea</div>
<div class="a" style="left:781.6px;top:694.66px;font-size:12.25px;line-height:16px;color:#444;white-space:nowrap;letter-spacing:-0.463px;">(long</div>
<div class="a" style="left:781.6px;top:710.26px;font-size:12.25px;line-height:16px;color:#444;white-space:nowrap;letter-spacing:-0.405px;">text)</div>
<div class="a" style="left:745px;top:743.2px;width:90.6px;height:48.3px;background:#f7f7f7;border:1px solid #dfdfdf;box-shadow:0 1px 1px rgba(0,0,0,.06)"></div>
<svg class="a" style="left:754.3px;top:753.4px;" width="14" height="14" viewBox="0 0 14 14"><path transform="translate(-1.050 -1.050) scale(1.150)" d="M7 2.500a4.500 4.500 0 0 1 4.300 3.200h1.700l-2.600 2.900L7.800 5.700h1.600A2.800 2.800 0 0 0 4.300 6L3 5A4.500 4.500 0 0 1 7 2.500zM7 11.500a4.500 4.500 0 0 1-4.300-3.200H1l2.600-2.900L6.200 8.300H4.600a2.800 2.800 0 0 0 5.100-.3L11 9a4.500 4.500 0 0 1-4 2.500z" fill="#0071a1"/></svg>
<div class="a" style="left:781.6px;top:752.26px;font-size:12.25px;line-height:16px;color:#444;white-space:nowrap;letter-spacing:-0.636px;">reCAPTC</div>
<div class="a" style="left:781.6px;top:767.86px;font-size:12.25px;line-height:16px;color:#444;white-space:nowrap;letter-spacing:-0.723px;">HA</div>
<div class="a" style="left:853.5px;top:321.9px;width:90.6px;height:64.1px;background:#f7f7f7;border:1px solid #dfdfdf;box-shadow:0 1px 1px rgba(0,0,0,.06)"></div>
<svg class="a" style="left:862.8px;top:332.1px;" width="14" height="14" viewBox="0 0 14 14"><path d="M11 7v4.500H2.500V3H8" fill="none" stroke="#0071a1" stroke-width="1.400"/><path d="M5 6l2 2.200L12 2.500" fill="none" stroke="#0071a1" stroke-width="1.700"/></svg>
<div class="a" style="left:890.1px;top:330.96px;font-size:12.25px;line-height:16px;color:#444;white-space:nowrap;letter-spacing:-0.587px;">Checkbo</div>
<div class="a" style="left:890.1px;top:346.56px;font-size:12.25px;line-height:16px;color:#444;white-space:nowrap;letter-spacing:-0.521px;">x</div>
<div class="a" style="left:890.1px;top:362.16px;font-size:12.25px;line-height:16px;color:#444;white-space:nowrap;letter-spacing:-0.441px;">(option)</div>
<div class="a" style="left:853.5px;top:395.3px;width:90.6px;height:33px;background:#f7f7f7;border:1px solid #dfdfdf;box-shadow:0 1px 1px rgba(0,0,0,.06)"></div>
<svg class="a" style="left:862.8px;top:406.6px;" width="14" height="14" viewBox="0 0 14 14"><rect x="1.500" y="3" width="11" height="8" rx="1" fill="none" stroke="#0071a1" stroke-width="1.200"/><path d="M2.500 4.500L7 7.800l4.500-3.300M2.500 10l3-2.500M11.500 10l-3-2.500" fill="none" stroke="#0071a1" stroke-width=".900"/></svg>
<div class="a" style="left:890.1px;top:404.36px;font-size:12.25px;line-height:16px;color:#444;white-space:nowrap;letter-spacing:-0.521px;">Email</div>
<div class="a" style="left:853.5px;top:437.6px;width:90.6px;height:32.9px;background:#f7f7f7;border:1px solid #dfdfdf;box-shadow:0 1px 1px rgba(0,0,0,.06)"></div>
<div class="a" style="left:861.8px;top:450.48px;font-size:9.3px;line-height:12px;color:#0071a1;white-space:nowrap;font-weight:bold;letter-spacing:0.335px;">A-Z</div>
<div class="a" style="left:890.1px;top:446.66px;font-size:12.25px;line-height:16px;color:#444;white-space:nowrap;letter-spacing:-0.617px;">Number</div>
<div class="a" style="left:853.5px;top:480.2px;width:90.6px;height:63.7px;background:#f7f7f7;border:1px solid #dfdfdf;box-shadow:0 1px 1px rgba(0,0,0,.06)"></div>
<svg class="a" style="left:862.8px;top:490.4px;" width="14" height="14" viewBox="0 0 14 14"><circle cx="7" cy="7" r="3.400" fill="none" stroke="#0071a1" stroke-width="1.300"/></svg>
<div class="a" style="left:890.1px;top:489.26px;font-size:12.25px;line-height:16px;color:#444;white-space:nowrap;letter-spacing:-0.544px;">Radio</div>
<div class="a" style="left:890.1px;top:504.86px;font-size:12.25px;line-height:16px;color:#444;white-space:nowrap;letter-spacing:-0.502px;">Button</div>
<div class="a" style="left:890.1px;top:520.46px;font-size:12.25px;line-height:16px;color:#444;white-space:nowrap;letter-spacing:-0.441px;">(option)</div>
<div class="a" style="left:853.5px;top:553.8px;width:90.6px;height:33.1px;background:#f7f7f7;border:1px solid #dfdfdf;box-shadow:0 1px 1px rgba(0,0,0,.06)"></div>
<svg class="a" style="left:862.8px;top:565.1px;" width="14" height="14" viewBox="0 0 14 14"><rect x="1.500" y="3" width="11" height="8" rx="1" fill="none" stroke="#0071a1" stroke-width="1.200"/><path d="M2.500 4.500L7 7.800l4.500-3.300M2.500 10l3-2.500M11.500 10l-3-2.500" fill="none" stroke="#0071a1" stroke-width=".900"/></svg>
<div class="a" style="left:890.1px;top:562.86px;font-size:12.25px;line-height:16px;color:#444;white-space:nowrap;letter-spacing:-0.540px;">Submit</div>
<div class="a" style="left:853.5px;top:596.1px;width:90.6px;height:64px;background:#f7f7f7;border:1px solid #dfdfdf;box-shadow:0 1px 1px rgba(0,0,0,.06)"></div>
<div class="a" style="left:861.8px;top:608.98px;font-size:9.3px;line-height:12px;color:#0071a1;white-space:nowrap;font-weight:bold;letter-spacing:0.335px;">A-Z</div>
<div class="a" style="left:890.1px;top:605.16px;font-size:12.25px;line-height:16px;color:#444;white-space:nowrap;letter-spacing:-0.477px;">Text</div>
<div class="a" style="left:890.1px;top:620.76px;font-size:12.25px;line-height:16px;color:#444;white-space:nowrap;letter-spacing:-0.444px;">(short</div>
<div class="a" style="left:890.1px;top:636.36px;font-size:12.25px;line-height:16px;color:#444;white-space:nowrap;letter-spacing:-0.405px;">text)</div>
<div class="a" style="left:853.5px;top:670px;width:90.6px;height:63.6px;background:#f7f7f7;border:1px solid #dfdfdf;box-shadow:0 1px 1px rgba(0,0,0,.06)"></div>
<svg class="a" style="left:862.8px;top:680.2px;" width="14" height="14" viewBox="0 0 14 14"><path d="M5 9a2.500 2.500 0 0 1 0-3.500l2-2a2.500 2.500 0 0 1 3.500 3.500l-2 2A2.500 2.500 0 0 1 5 9z" fill="none" stroke="#0071a1" stroke-width="1.300"/><path d="M3 12L11.500 2" stroke="#0071a1" stroke-width="1.200"/></svg>
<div class="a" style="left:890.1px;top:679.06px;font-size:12.25px;line-height:16px;color:#444;white-space:nowrap;letter-spacing:-0.694px;">URL</div>
<div class="a" style="left:890.1px;top:694.66px;font-size:12.25px;line-height:16px;color:#444;white-space:nowrap;letter-spacing:-0.485px;">(website</div>
<div class="a" style="left:890.1px;top:710.26px;font-size:12.25px;line-height:16px;color:#444;white-space:nowrap;letter-spacing:-0.382px;">link)</div>
<div class="a" style="left:744.9px;top:818.2px;width:199px;height:20px;background:#fff;border:2px solid #ff9a1f;border-radius:3px"></div>
<div class="a" style="left:1007.5px;top:97px;width:585.5px;height:734px;background:#fff"></div>
<div class="a" style="left:1007.5px;top:97px;width:585.5px;height:23.3px;background:#f3f3f3;border-bottom:1px solid #cbcbcb"></div>
<div class="a" style="left:1006.8px;top:97px;width:1px;height:734px;background:#cdcdcd"></div>
<svg class="a" style="left:1015.5px;top:102px;" width="14" height="14" viewBox="0 0 15 15"><path d="M12.500 6V2H1.500v11H6" fill="none" stroke="#6e6e6e" stroke-width="1.200" stroke-dasharray="0"/><path d="M7 6.500l7 3-3 1 2.300 2.800-1.200 1L9.800 11.500 8 13.500z" fill="#5a5a5a"/></svg>
<svg class="a" style="left:1038px;top:103px;" width="15" height="15" viewBox="0 0 15 15"><rect x="4.500" y="1" width="8.500" height="12.500" rx="1" fill="none" stroke="#6e6e6e" stroke-width="1.200"/><rect x="1" y="6" width="5.500" height="7.500" fill="#f3f3f3" stroke="#6e6e6e" stroke-width="1.200"/></svg>
<div class="a" style="left:1061.5px;top:102px;width:1px;height:15px;background:#cbcbcb"></div>
<div class="a" style="left:1078px;top:101.68px;font-size:11.3px;line-height:15px;color:#333;white-space:nowrap;letter-spacing:-0.763px;">Elements</div>
<div class="a" style="left:1139px;top:101.68px;font-size:11.3px;line-height:15px;color:#5f6368;white-space:nowrap;letter-spacing:-0.637px;">Console</div>
<div class="a" style="left:1196.5px;top:101.68px;font-size:11.3px;line-height:15px;color:#5f6368;white-space:nowrap;letter-spacing:-0.851px;">Sources</div>
<div class="a" style="left:1252.7px;top:101.68px;font-size:11.3px;line-height:15px;color:#5f6368;white-space:nowrap;letter-spacing:-0.349px;">Network</div>
<div class="a" style="left:1312.3px;top:101.68px;font-size:11.3px;line-height:15px;color:#5f6368;white-space:nowrap;letter-spacing:-0.418px;">Memory</div>
<div class="a" style="left:1371.2px;top:101.68px;font-size:11.3px;line-height:15px;color:#5f6368;white-space:nowrap;letter-spacing:-0.663px;">Performance</div>
<div class="a" style="left:1068px;top:118.5px;width:61.5px;height:1.8px;background:#1a73e8"></div>
<svg class="a" style="left:1446.5px;top:104.3px;" width="8" height="8" viewBox="0 0 8 8"><path d="M.800 .600L4 4 .800 7.400M4.300 .600L7.500 4 4.300 7.400" fill="none" stroke="#5f6368" stroke-width="1.100"/></svg>
<div class="a" style="left:1514px;top:102px;width:1px;height:15px;background:#cbcbcb"></div>
<svg class="a" style="left:1522.5px;top:100.5px;" width="15" height="15" viewBox="0 0 15 15"><path d="M7.500 0l1.200 .1.400 1.900 1.300.5 1.600-1.100 1.700 1.700-1.100 1.600.5 1.300 1.900.4v2.400l-1.900.4-.5 1.300 1.100 1.600-1.700 1.700-1.600-1.100-1.300.5-.4 1.900H6.300l-.4-1.900-1.300-.5-1.600 1.100-1.700-1.700 1.100-1.600-.5-1.300L0 8.700V6.300l1.900-.4.5-1.300L1.300 3 3 1.300l1.600 1.100 1.300-.5.400-1.900z" fill="#5f6368" transform="translate(1.500 1.500) scale(.8)"/><circle cx="7.500" cy="7.500" r="2" fill="#f3f3f3"/></svg>
<div class="a" style="left:1553.8px;top:103.2px;width:2.6px;height:2.6px;background:#5f6368;border-radius:50%"></div>
<div class="a" style="left:1553.8px;top:107.5px;width:2.6px;height:2.6px;background:#5f6368;border-radius:50%"></div>
<div class="a" style="left:1553.8px;top:111.8px;width:2.6px;height:2.6px;background:#5f6368;border-radius:50%"></div>
<svg class="a" style="left:1574px;top:103.3px;" width="10" height="10" viewBox="0 0 10 10"><path d="M.8 .8l8.400 8.400M9.200 .8L.8 9.200" stroke="#5f6368" stroke-width="1.300"/></svg>
<div class="a" style="left:1007.5px;top:325px;width:570.3px;height:27.6px;background:#cfe8fc"></div>
<div class="a" style="left:1011px;top:322.74px;font-size:11px;line-height:14px;color:#5f6368;white-space:nowrap;letter-spacing:0">…</div>
<div class="a" style="left:1007.5px;top:121px;width:569.5px;height:6px;overflow:hidden">
<div class="a m" style="left:199.5px;top:-7px;font-size:10.6px;line-height:13px;letter-spacing:-0.670px;white-space:nowrap;color:#881280">&lt;div class="FormNotice___37K1y"&gt;&lt;/div&gt;</div></div>
<div class="a m" style="left:1207px;top:128.98px;font-size:10.6px;line-height:13px;letter-spacing:-0.670px;white-space:nowrap;"><span style="color:#881280">&lt;div</span><span style="color:#994500"> class</span><span style="color:#a894a6">="</span><span style="color:#1a1aa6">Items___1jMS3</span><span style="color:#a894a6">"</span><span style="color:#881280">&gt;</span></div>
<svg class="a" style="left:1197.9px;top:131.5px;" width="7" height="5" viewBox="0 0 7 5"><path d="M0 0h7L3.500 5z" fill="#5f5f5f"/></svg>
<div class="a m" style="left:1217.43px;top:143.98px;font-size:10.6px;line-height:13px;letter-spacing:-0.670px;white-space:nowrap;"><span style="color:#881280">&lt;div</span><span style="color:#994500"> class</span><span style="color:#a894a6">="</span><span style="color:#1a1aa6">rst__tree</span><span style="color:#a894a6">"</span><span style="color:#994500"> style</span><span style="color:#a894a6">="</span><span style="color:#1a1aa6">height: 100%; position: relative;</span></div>
<svg class="a" style="left:1208.33px;top:146.5px;" width="7" height="5" viewBox="0 0 7 5"><path d="M0 0h7L3.500 5z" fill="#5f5f5f"/></svg>
<div class="a m" style="left:1208.03px;top:157.73px;font-size:10.6px;line-height:13px;letter-spacing:-0.670px;white-space:nowrap;"><span style="color:#a894a6">"</span><span style="color:#881280">&gt;</span></div>
<div class="a m" style="left:1227.86px;top:172.23px;font-size:10.6px;line-height:13px;letter-spacing:-0.670px;white-space:nowrap;"><span style="color:#881280">&lt;div</span><span style="color:#994500"> style</span><span style="color:#a894a6">="</span><span style="color:#1a1aa6">overflow: visible; height: 0px; width: 0px;</span><span style="color:#a894a6">"</span><span style="color:#881280">&gt;</span></div>
<svg class="a" style="left:1218.76px;top:174.75px;" width="7" height="5" viewBox="0 0 7 5"><path d="M0 0h7L3.500 5z" fill="#5f5f5f"/></svg>
<div class="a m" style="left:1238.29px;top:186.73px;font-size:10.6px;line-height:13px;letter-spacing:-0.670px;white-space:nowrap;"><span style="color:#881280">&lt;div</span><span style="color:#994500"> aria-label</span><span style="color:#a894a6">="</span><span style="color:#1a1aa6">grid</span><span style="color:#a894a6">"</span><span style="color:#994500"> aria-readonly</span><span style="color:#a894a6">="</span><span style="color:#1a1aa6">true</span><span style="color:#a894a6">"</span><span style="color:#994500"> class</span><span style="color:#a894a6">="</span><span style="color:#1a1aa6">ReactVir</span></div>
<svg class="a" style="left:1229.19px;top:189.25px;" width="7" height="5" viewBox="0 0 7 5"><path d="M0 0h7L3.500 5z" fill="#5f5f5f"/></svg>
<div class="a m" style="left:1228.89px;top:200.98px;font-size:10.6px;line-height:13px;letter-spacing:-0.670px;white-space:nowrap;"><span style="color:#1a1aa6">tualized__Grid ReactVirtualized__List rst__virtualScrollOverr</span></div>
<div class="a m" style="left:1228.89px;top:214.23px;font-size:10.6px;line-height:13px;letter-spacing:-0.670px;white-space:nowrap;"><span style="color:#1a1aa6">ide</span><span style="color:#a894a6">"</span><span style="color:#994500"> role</span><span style="color:#a894a6">="</span><span style="color:#1a1aa6">grid</span><span style="color:#a894a6">"</span><span style="color:#994500"> tabindex</span><span style="color:#a894a6">="</span><span style="color:#1a1aa6">0</span><span style="color:#a894a6">"</span><span style="color:#994500"> style</span><span style="color:#a894a6">="</span><span style="color:#1a1aa6">box-sizing: border-box;</span></div>
<div class="a m" style="left:1228.89px;top:227.98px;font-size:10.6px;line-height:13px;letter-spacing:-0.670px;white-space:nowrap;"><span style="color:#1a1aa6">direction: ltr; height: 953px; position: relative; width: 618</span></div>
<div class="a m" style="left:1228.89px;top:241.73px;font-size:10.6px;line-height:13px;letter-spacing:-0.670px;white-space:nowrap;"><span style="color:#1a1aa6">px; will-change: transform; overflow: hidden; padding: 20px;</span></div>
<div class="a m" style="left:1228.89px;top:255.98px;font-size:10.6px;line-height:13px;letter-spacing:-0.670px;white-space:nowrap;"><span style="color:#a894a6">"</span><span style="color:#881280">&gt;</span></div>
<div class="a m" style="left:1248.72px;top:270.48px;font-size:10.6px;line-height:13px;letter-spacing:-0.670px;white-space:nowrap;"><span style="color:#881280">&lt;div</span><span style="color:#994500"> class</span><span style="color:#a894a6">="</span><span style="color:#1a1aa6">ReactVirtualized__Grid__innerScrollContainer</span><span style="color:#a894a6">"</span></div>
<svg class="a" style="left:1239.62px;top:273px;" width="7" height="5" viewBox="0 0 7 5"><path d="M0 0h7L3.500 5z" fill="#5f5f5f"/></svg>
<div class="a m" style="left:1239.32px;top:284.23px;font-size:10.6px;line-height:13px;letter-spacing:-0.670px;white-space:nowrap;"><span style="color:#994500">role</span><span style="color:#a894a6">="</span><span style="color:#1a1aa6">rowgroup</span><span style="color:#a894a6">"</span><span style="color:#994500"> style</span><span style="color:#a894a6">="</span><span style="color:#1a1aa6">width: auto; height: 806px; max-widt</span></div>
<div class="a m" style="left:1239.32px;top:298.48px;font-size:10.6px;line-height:13px;letter-spacing:-0.670px;white-space:nowrap;"><span style="color:#1a1aa6">h: 618px; max-height: 806px; overflow: hidden; position: re</span></div>
<div class="a m" style="left:1239.32px;top:312.23px;font-size:10.6px;line-height:13px;letter-spacing:-0.670px;white-space:nowrap;"><span style="color:#1a1aa6">lative;</span><span style="color:#a894a6">"</span><span style="color:#881280">&gt;</span></div>
<div class="a m" style="left:1259.15px;top:327.23px;font-size:10.6px;line-height:13px;letter-spacing:-0.670px;white-space:nowrap;"><span style="color:#881280">&lt;div</span><span style="color:#994500"> class</span><span style="color:#a894a6">="</span><span style="color:#1a1aa6">rst__node</span><span style="color:#a894a6">"</span><span style="color:#994500"> style</span><span style="color:#a894a6">="</span><span style="color:#1a1aa6">height: 62px; left: 0px; p</span></div>
<svg class="a" style="left:1250.05px;top:329.75px;" width="7" height="5" viewBox="0 0 7 5"><path d="M0 0h7L3.500 5z" fill="#5f5f5f"/></svg>
<div class="a m" style="left:1249.75px;top:340.98px;font-size:10.6px;line-height:13px;letter-spacing:-0.670px;white-space:nowrap;"><span style="color:#1a1aa6">osition: absolute; top: 0px; width: 100%;</span><span style="color:#a894a6">"</span><span style="color:#881280">&gt;</span><span style="color:#777;font-style:italic"> == $0</span></div>
<div class="a m" style="left:1269.58px;top:355.48px;font-size:10.6px;line-height:13px;letter-spacing:-0.670px;white-space:nowrap;"><span style="color:#881280">&lt;div</span><span style="color:#994500"> class</span><span style="color:#a894a6">="</span><span style="color:#1a1aa6">rst__lineBlock rst__lineHalfHorizontalRigh</span></div>
<svg class="a" style="left:1261.48px;top:357px;" width="5" height="7" viewBox="0 0 5 7"><path d="M0 0v7l5-3.500z" fill="#5f5f5f"/></svg>
<div class="a m" style="left:1260.18px;top:369.23px;font-size:10.6px;line-height:13px;letter-spacing:-0.670px;white-space:nowrap;"><span style="color:#1a1aa6">t rst__lineHalfVerticalBottom</span><span style="color:#a894a6">"</span><span style="color:#994500"> style</span><span style="color:#a894a6">="</span><span style="color:#1a1aa6">width: 44px;</span><span style="color:#a894a6">"</span><span style="color:#881280">&gt;</span><span style="color:#222">…</span></div>
<div class="a m" style="left:1260.18px;top:383.48px;font-size:10.6px;line-height:13px;letter-spacing:-0.670px;white-space:nowrap;"><span style="color:#881280">&lt;/div&gt;</span></div>
<div class="a m" style="left:1269.58px;top:397.98px;font-size:10.6px;line-height:13px;letter-spacing:-0.670px;white-space:nowrap;"><span style="color:#881280">&lt;div</span><span style="color:#994500"> class</span><span style="color:#a894a6">="</span><span style="color:#1a1aa6">rst__nodeContent</span><span style="color:#a894a6">"</span><span style="color:#994500"> style</span><span style="color:#a894a6">="</span><span style="color:#1a1aa6">left: 44px;</span><span style="color:#a894a6">"</span><span style="color:#881280">&gt;</span><span style="color:#222">…</span></div>
<svg class="a" style="left:1261.48px;top:399.5px;" width="5" height="7" viewBox="0 0 5 7"><path d="M0 0v7l5-3.500z" fill="#5f5f5f"/></svg>
<div class="a m" style="left:1260.18px;top:412.28px;font-size:10.6px;line-height:13px;letter-spacing:-0.670px;white-space:nowrap;"><span style="color:#881280">&lt;/div&gt;</span></div>
<div class="a m" style="left:1259.15px;top:426.48px;font-size:10.6px;line-height:13px;letter-spacing:-0.670px;white-space:nowrap;"><span style="color:#881280">&lt;/div&gt;</span></div>
<div class="a m" style="left:1259.15px;top:440.98px;font-size:10.6px;line-height:13px;letter-spacing:-0.670px;white-space:nowrap;"><span style="color:#881280">&lt;div</span><span style="color:#994500"> class</span><span style="color:#a894a6">="</span><span style="color:#1a1aa6">rst__node</span><span style="color:#a894a6">"</span><span style="color:#994500"> style</span><span style="color:#a894a6">="</span><span style="color:#1a1aa6">height: 62px; left: 0px; p</span></div>
<svg class="a" style="left:1251.05px;top:442.5px;" width="5" height="7" viewBox="0 0 5 7"><path d="M0 0v7l5-3.500z" fill="#5f5f5f"/></svg>
<div class="a m" style="left:1249.75px;top:455.23px;font-size:10.6px;line-height:13px;letter-spacing:-0.670px;white-space:nowrap;"><span style="color:#1a1aa6">osition: absolute; top: 62px; width: 100%;</span><span style="color:#a894a6">"</span><span style="color:#881280">&gt;</span><span style="color:#222">…</span><span style="color:#881280">&lt;/div&gt;</span></div>
<div class="a m" style="left:1259.15px;top:469.73px;font-size:10.6px;line-height:13px;letter-spacing:-0.670px;white-space:nowrap;"><span style="color:#881280">&lt;div</span><span style="color:#994500"> class</span><span style="color:#a894a6">="</span><span style="color:#1a1aa6">rst__node</span><span style="color:#a894a6">"</span><span style="color:#994500"> style</span><span style="color:#a894a6">="</span><span style="color:#1a1aa6">height: 62px; left: 0px; p</span></div>
<svg class="a" style="left:1251.05px;top:471.25px;" width="5" height="7" viewBox="0 0 5 7"><path d="M0 0v7l5-3.500z" fill="#5f5f5f"/></svg>
<div class="a m" style="left:1249.75px;top:483.73px;font-size:10.6px;line-height:13px;letter-spacing:-0.670px;white-space:nowrap;"><span style="color:#1a1aa6">osition: absolute; top: 124px; width: 100%;</span><span style="color:#a894a6">"</span><span style="color:#881280">&gt;</span><span style="color:#222">…</span><span style="color:#881280">&lt;/div&gt;</span></div>
<div class="a m" style="left:1259.15px;top:498.23px;font-size:10.6px;line-height:13px;letter-spacing:-0.670px;white-space:nowrap;"><span style="color:#881280">&lt;div</span><span style="color:#994500"> class</span><span style="color:#a894a6">="</span><span style="color:#1a1aa6">rst__node</span><span style="color:#a894a6">"</span><span style="color:#994500"> style</span><span style="color:#a894a6">="</span><span style="color:#1a1aa6">height: 62px; left: 0px; p</span></div>
<svg class="a" style="left:1251.05px;top:499.75px;" width="5" height="7" viewBox="0 0 5 7"><path d="M0 0v7l5-3.500z" fill="#5f5f5f"/></svg>
<div class="a m" style="left:1249.75px;top:512.28px;font-size:10.6px;line-height:13px;letter-spacing:-0.670px;white-space:nowrap;"><span style="color:#1a1aa6">osition: absolute; top: 186px; width: 100%;</span><span style="color:#a894a6">"</span><span style="color:#881280">&gt;</span><span style="color:#222">…</span><span style="color:#881280">&lt;/div&gt;</span></div>
<div class="a" style="left:1578.5px;top:120.5px;width:14.5px;height:398.5px;background:#f1f1f1"></div>
<svg class="a" style="left:1582.3px;top:126.7px;" width="7" height="4" viewBox="0 0 7 4"><path d="M3.500 0L7 4H0z" fill="#505050"/></svg>
<svg class="a" style="left:1582.3px;top:508.7px;" width="7" height="4" viewBox="0 0 7 4"><path d="M3.500 4L7 0H0z" fill="#505050"/></svg>
<div class="a" style="left:1580px;top:223px;width:11px;height:46.7px;background:#c1c1c1"></div>
<div class="a" style="left:1007.5px;top:518.5px;width:585.5px;height:23.5px;background:#fff;border-top:1px solid #cbcbcb"></div>
<div class="a" style="left:1013px;top:520.50px;font-size:13px;line-height:17px;color:#222;white-space:nowrap;font-weight:bold;">…</div>
<div class="a" style="left:1030px;top:522.68px;width:231.300px;height:16px;overflow:hidden">
<div class="a" style="right:-0.613px;top:0;font-size:11.300px;line-height:15px;color:#881280;white-space:nowrap;letter-spacing:-0.613px">div.ReactVirtualized__Grid.ReactVirtualized__List.rst__virtualScrollOverride</div></div>
<div class="a" style="left:1273.7px;top:522.68px;font-size:11.3px;line-height:15px;color:#881280;white-space:nowrap;letter-spacing:-0.606px;">div.ReactVirtualized__Grid__innerScrollContainer</div>
<div class="a" style="left:1498.5px;top:519.5px;width:94.5px;height:20px;background:#eff0f1"></div>
<div class="a" style="left:1504.7px;top:522.68px;font-size:11.3px;line-height:15px;color:#881280;white-space:nowrap;letter-spacing:-0.593px;">div.rst__node</div>
<div class="a" style="left:1577px;top:530.6px;width:1.6px;height:1.6px;background:#b0b0b0;border-radius:50%"></div>
<div class="a" style="left:1580.6px;top:530.6px;width:1.6px;height:1.6px;background:#b0b0b0;border-radius:50%"></div>
<div class="a" style="left:1584.2px;top:530.6px;width:1.6px;height:1.6px;background:#b0b0b0;border-radius:50%"></div>
<div class="a" style="left:1007.5px;top:539.4px;width:585.5px;height:24px;background:#f3f3f3;border-bottom:1px solid #cbcbcb;border-top:1px solid #cbcbcb"></div>
<div class="a" style="left:1016px;top:544.98px;font-size:11.3px;line-height:15px;color:#333;white-space:nowrap;letter-spacing:-0.729px;">Styles</div>
<div class="a" style="left:1059.6px;top:544.98px;font-size:11.3px;line-height:15px;color:#5f6368;white-space:nowrap;letter-spacing:-0.467px;">Computed</div>
<div class="a" style="left:1125.2px;top:544.98px;font-size:11.3px;line-height:15px;color:#5f6368;white-space:nowrap;letter-spacing:-0.521px;">Layout</div>
<div class="a" style="left:1173px;top:544.98px;font-size:11.3px;line-height:15px;color:#5f6368;white-space:nowrap;letter-spacing:-0.679px;">Event Listeners</div>
<div class="a" style="left:1258px;top:544.98px;font-size:11.3px;line-height:15px;color:#5f6368;white-space:nowrap;letter-spacing:-0.545px;">DOM Breakpoints</div>
<div class="a" style="left:1356.2px;top:544.98px;font-size:11.3px;line-height:15px;color:#5f6368;white-space:nowrap;letter-spacing:-0.500px;">Properties</div>
<div class="a" style="left:1419.6px;top:544.98px;font-size:11.3px;line-height:15px;color:#5f6368;white-space:nowrap;letter-spacing:-0.472px;">Accessibility</div>
<div class="a" style="left:1008px;top:561.5px;width:43.5px;height:2px;background:#1a73e8"></div>
<div class="a" style="left:1007.5px;top:563.4px;width:570.3px;height:23.3px;background:#f3f3f3;border-bottom:1px solid #e6e6e6"></div>
<div class="a" style="left:1010.5px;top:566px;width:450px;height:18px;background:#fff"></div>
<div class="a" style="left:1014.2px;top:568.08px;font-size:11.3px;line-height:15px;color:#8a8a8a;white-space:nowrap;letter-spacing:-0.302px;">Filter</div>
<div class="a m" style="left:1469.4px;top:569.38px;font-size:10.6px;line-height:13px;letter-spacing:-0.670px;white-space:nowrap;"><span style="color:#444">:hov</span></div>
<div class="a m" style="left:1501px;top:569.38px;font-size:10.6px;line-height:13px;letter-spacing:-0.670px;white-space:nowrap;"><span style="color:#444">.cls</span></div>
<svg class="a" style="left:1534.5px;top:569.5px;" width="13" height="13" viewBox="0 0 13 13"><path d="M5.500 1v9M1 5.500h9" stroke="#555" stroke-width="1.200"/><path d="M12.500 9.500v3h-3z" fill="#555"/></svg>
<svg class="a" style="left:1557.5px;top:569.5px;" width="13" height="12" viewBox="0 0 13 12"><rect x=".600" y=".600" width="11.800" height="10.800" fill="none" stroke="#555" stroke-width="1.200"/><path d="M8 .600v10.800" stroke="#555" stroke-width="1"/><path d="M6 3.500v5L3 6z" fill="#555"/></svg>
<div class="a m" style="left:1012px;top:588.98px;font-size:10.6px;line-height:13px;letter-spacing:-0.670px;white-space:nowrap;"><span style="color:#6a6a6a">element.style {</span></div>
<div class="a m" style="left:1027.4px;top:602.98px;font-size:10.6px;line-height:13px;letter-spacing:-0.670px;white-space:nowrap;"><span style="color:#c80000">height</span><span style="color:#222">: </span><span style="color:#222">62px;</span></div>
<div class="a m" style="left:1027.4px;top:615.18px;font-size:10.6px;line-height:13px;letter-spacing:-0.670px;white-space:nowrap;"><span style="color:#c80000">left</span><span style="color:#222">: </span><span style="color:#222">0px;</span></div>
<div class="a m" style="left:1027.4px;top:627.18px;font-size:10.6px;line-height:13px;letter-spacing:-0.670px;white-space:nowrap;"><span style="color:#c80000">position</span><span style="color:#222">: </span><span style="color:#222">absolute;</span></div>
<div class="a m" style="left:1027.4px;top:639.38px;font-size:10.6px;line-height:13px;letter-spacing:-0.670px;white-space:nowrap;"><span style="color:#c80000">top</span><span style="color:#222">: </span><span style="color:#222">0px;</span></div>
<div class="a m" style="left:1027.4px;top:651.38px;font-size:10.6px;line-height:13px;letter-spacing:-0.670px;white-space:nowrap;"><span style="color:#c80000">width</span><span style="color:#222">: </span><span style="color:#222">100%;</span></div>
<div class="a m" style="left:1012px;top:663.18px;font-size:10.6px;line-height:13px;letter-spacing:-0.670px;white-space:nowrap;"><span style="color:#888">}</span></div>
<div class="a" style="left:1007.5px;top:678.5px;width:570.3px;height:1px;background:#dcdcdc"></div>
<div class="a m" style="left:1012px;top:682.18px;font-size:10.6px;line-height:13px;letter-spacing:-0.670px;white-space:nowrap;"><span style="color:#222">.rst__virtualScrollOverride * {</span></div>
<div class="a m" style="left:1537px;top:682.18px;font-size:10.6px;line-height:13px;letter-spacing:-0.670px;white-space:nowrap;"><span style="color:#888">&lt;style&gt;</span></div>
<div class="a m" style="left:1027.4px;top:696.18px;font-size:10.6px;line-height:13px;letter-spacing:-0.670px;white-space:nowrap;text-decoration:line-through;text-decoration-color:#222;"><span style="color:#c80000">-webkit-box-sizing</span><span style="color:#222">: </span><span style="color:#222">border-box;</span></div>
<div class="a m" style="left:1027.4px;top:708.28px;font-size:10.6px;line-height:13px;letter-spacing:-0.670px;white-space:nowrap;"><span style="color:#c80000">box-sizing</span><span style="color:#222">: </span><span style="color:#222">border-box;</span></div>
<div class="a m" style="left:1012px;top:719.78px;font-size:10.6px;line-height:13px;letter-spacing:-0.670px;white-space:nowrap;"><span style="color:#888">}</span></div>
<div class="a" style="left:1007.5px;top:735px;width:570.3px;height:1px;background:#dcdcdc"></div>
<div class="a m" style="left:1012px;top:738.28px;font-size:10.6px;line-height:13px;letter-spacing:-0.670px;white-space:nowrap;"><span style="color:#222">.rst__node {</span></div>
<div class="a m" style="left:1537px;top:738.28px;font-size:10.6px;line-height:13px;letter-spacing:-0.670px;white-space:nowrap;"><span style="color:#888">&lt;style&gt;</span></div>
<div class="a m" style="left:1027.4px;top:751.78px;font-size:10.6px;line-height:13px;letter-spacing:-0.670px;white-space:nowrap;"><span style="color:#c80000">min-width</span><span style="color:#222">: </span><span style="color:#222">100%;</span></div>
<div class="a m" style="left:1027.4px;top:763.58px;font-size:10.6px;line-height:13px;letter-spacing:-0.670px;white-space:nowrap;"><span style="color:#c80000">white-space</span><span style="color:#222">: </span><span style="color:#222">nowrap;</span></div>
<div class="a m" style="left:1027.4px;top:776.18px;font-size:10.6px;line-height:13px;letter-spacing:-0.670px;white-space:nowrap;text-decoration:line-through;text-decoration-color:#222;"><span style="color:#c80000">position</span><span style="color:#222">: </span><span style="color:#222">relative;</span></div>
<div class="a m" style="left:1027.4px;top:788.48px;font-size:10.6px;line-height:13px;letter-spacing:-0.670px;white-space:nowrap;"><span style="color:#c80000">text-align</span><span style="color:#222">: </span><span style="color:#222">left;</span></div>
<div class="a m" style="left:1012px;top:800.68px;font-size:10.6px;line-height:13px;letter-spacing:-0.670px;white-space:nowrap;"><span style="color:#888">}</span></div>
<div class="a" style="left:1578.5px;top:564px;width:14.5px;height:252px;background:#f1f1f1"></div>
<svg class="a" style="left:1582.3px;top:570px;" width="7" height="4" viewBox="0 0 7 4"><path d="M3.500 0L7 4H0z" fill="#a3a3a3"/></svg>
<svg class="a" style="left:1582.3px;top:806.2px;" width="7" height="4" viewBox="0 0 7 4"><path d="M3.500 4L7 0H0z" fill="#505050"/></svg>
<div class="a" style="left:1580px;top:578.2px;width:11px;height:50px;background:#c1c1c1"></div>
<div class="a" style="left:1007.5px;top:815.6px;width:570.3px;height:15.4px;background:#f1f1f1"></div>
<div class="a" style="left:1577.8px;top:815.6px;width:15.2px;height:15.4px;background:#dcdcdc"></div>
<svg class="a" style="left:1013px;top:820px;" width="4" height="7" viewBox="0 0 4 7"><path d="M4 0v7L0 3.500z" fill="#a3a3a3"/></svg>
<svg class="a" style="left:1569.5px;top:820px;" width="4" height="7" viewBox="0 0 4 7"><path d="M0 0v7L4 3.500z" fill="#a3a3a3"/></svg>
<div class="a" style="left:0px;top:0px;width:6.5px;height:838px;background:#0086da"></div>
<div class="a" style="left:0px;top:1px;width:6px;height:9px;background:#1b2a3a"></div>
<div class="a" style="left:0px;top:62px;width:6px;height:16px;background:#9fb0d0;border-radius:0 3px 3px 0"></div>
<div class="a" style="left:0px;top:83px;width:6px;height:7px;background:rgba(255,255,255,.6)"></div>
<div class="a" style="left:0px;top:110px;width:6px;height:9px;background:#dbe9f7;transform:skewY(30deg)"></div>
<div class="a" style="left:0px;top:121px;width:6px;height:9px;background:#dbe9f7;transform:skewY(-30deg)"></div>
<div class="a" style="left:0px;top:161px;width:6px;height:8px;background:rgba(255,255,255,.6)"></div>
<div class="a" style="left:0px;top:216px;width:6.5px;height:41px;background:#b3161a"></div>
<div class="a" style="left:0px;top:232px;width:6.5px;height:5px;background:#f3dede;transform:skewY(-25deg)"></div>
<div class="a" style="left:0px;top:265px;width:6px;height:7px;background:rgba(255,255,255,.55)"></div>
<div class="a" style="left:0px;top:307px;width:6.5px;height:38px;background:linear-gradient(180deg,#ffb300,#ff7a00);border-radius:0 50% 50% 0"></div>
<div class="a" style="left:0px;top:348px;width:6px;height:8px;background:rgba(255,255,255,.5)"></div>
<div class="a" style="left:0px;top:391.5px;width:6.5px;height:36px;background:#f7a713"></div>
<div class="a" style="left:0px;top:399px;width:5px;height:22px;background:#fff6e0"></div>
<div class="a" style="left:0px;top:435px;width:6px;height:8px;background:rgba(255,255,255,.55)"></div>
<div class="a" style="left:0px;top:451px;width:6px;height:8px;background:rgba(255,255,255,.55)"></div>
<div class="a" style="left:0px;top:480px;width:6.5px;height:40px;background:#f4f6f8"></div>
<div class="a" style="left:0px;top:520px;width:6px;height:9px;background:rgba(255,255,255,.5)"></div>
<div class="a" style="left:0px;top:644px;width:6.5px;height:171px;background:#ececec"></div>
<div class="a" style="left:0px;top:644px;width:6.5px;height:41px;background:#e2e2e2"></div>
<div class="a" style="left:1593px;top:0px;width:7px;height:838px;background:#1038a8"></div>
<div class="a" style="left:0px;top:831px;width:1600px;height:7px;background:linear-gradient(90deg,#0094dc 0%,#0a88d6 50%,#0a62c4 72%,#0e3fae 100%)"></div>
</body></html>
